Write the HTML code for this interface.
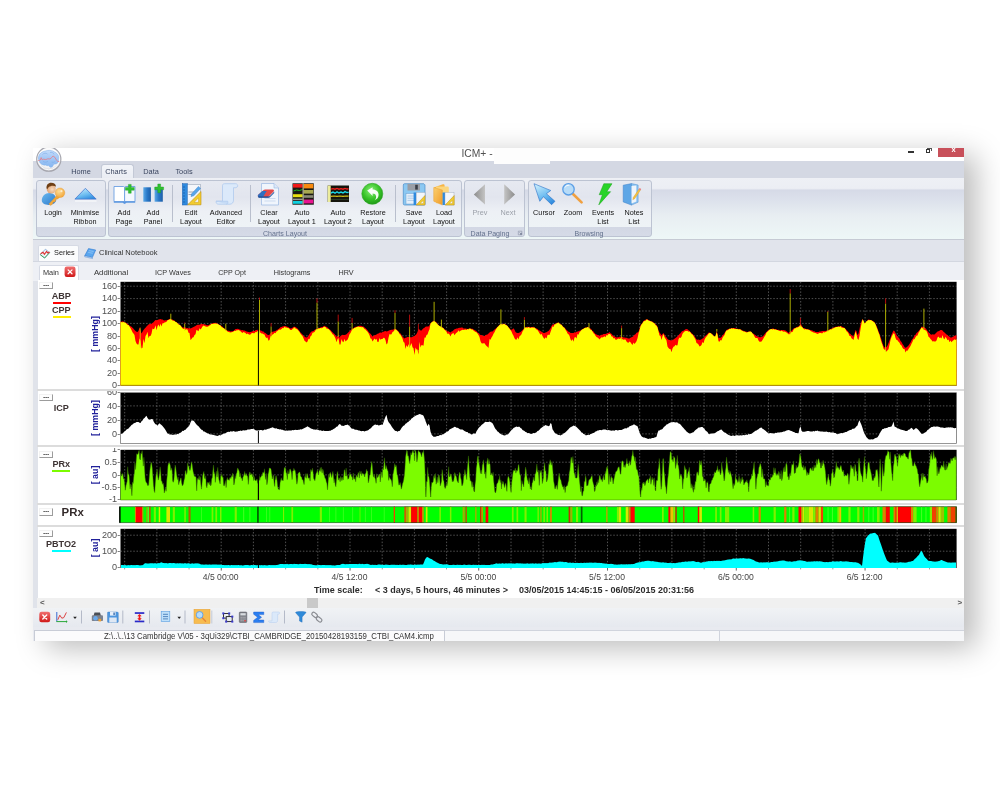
<!DOCTYPE html>
<html><head><meta charset="utf-8"><title>ICM+</title>
<style>
html,body{margin:0;padding:0;background:#fff;}
body{width:1000px;height:800px;overflow:hidden;position:relative;font-family:"Liberation Sans",sans-serif;font-size:8px;color:#222;}
#shadow{position:absolute;left:34px;top:148px;width:930px;height:492.5px;box-shadow:12px 7px 28px rgba(0,0,0,.27);}
#win{position:absolute;left:33.2px;top:147.6px;width:931.05px;height:493.3px;overflow:hidden;background:#e0e3ea;}
#in{position:absolute;left:-33.2px;top:-147.6px;width:1000px;height:800px;filter:blur(0.5px);}
.a{position:absolute;}
.t{position:absolute;white-space:nowrap;line-height:10px;transform-origin:0 50%;}
.c{transform:translateX(-50%) scaleX(.93);text-align:center;transform-origin:50% 50%;}
.lbl{position:absolute;white-space:nowrap;line-height:9px;font-size:7.8px;color:#111;text-align:center;transform:translateX(-50%) scaleX(.93);top:208px;}
.grp{position:absolute;top:179.9px;height:57.3px;border:1px solid #bcc3d2;border-radius:3px;box-sizing:border-box;background:linear-gradient(#e6e9f1 0,#e2e5ee 30%,#edf0f5 55%,#eef3f6 83%,#d2d7e4 83%,#d6dbe7 100%);}
.gl{position:absolute;top:228.5px;font-size:7.6px;color:#62708c;white-space:nowrap;transform:translateX(-50%) scaleX(.93);line-height:9px;}
.tab{position:absolute;top:166.5px;font-size:8px;color:#3b4660;transform:translateX(-50%) scaleX(.92);white-space:nowrap;line-height:10px;}
.sep{position:absolute;left:37px;width:928px;height:2px;background:#dcdcdc;}
.btn{position:absolute;border:1px solid #9c9c9c;border-top-color:#f2f2f2;border-left-color:#f2f2f2;background:#fdfdfd;box-sizing:border-box;font-size:8px;line-height:1.5px;text-align:center;color:#222;font-weight:bold;letter-spacing:-.2px}
.ax{position:absolute;font-size:9.1px;color:#505050;text-align:right;width:30px;left:90.2px;line-height:10px;white-space:nowrap;}
.unit{position:absolute;font-size:8.9px;font-weight:bold;color:#20209a;white-space:nowrap;transform:translate(-50%,-50%) rotate(-90deg);line-height:10px;}
.ser{position:absolute;font-size:9.1px;font-weight:bold;color:#3e3434;transform:translateX(-50%);white-space:nowrap;line-height:10px;}
.tl{position:absolute;top:572px;font-size:8.6px;color:#444;transform:translateX(-50%);white-space:nowrap;line-height:10px;}
</style></head><body>
<div id="shadow"></div>
<div id="win"><div id="in">
<!-- title bar -->
<div class="a" style="left:33px;top:147px;width:932px;height:14px;background:#fff"></div>
<div class="a" style="left:33px;top:161px;width:932px;height:17.3px;background:#d4d8e3"></div>
<div class="t" style="left:461.5px;top:149.1px;font-size:10.3px;color:#505050;">ICM+ -</div>
<div class="a" style="left:493.5px;top:147px;width:56.5px;height:16.8px;background:#fdfdfd"></div>
<div class="a" style="left:938px;top:147px;width:27px;height:9.6px;background:#c8505a"></div>
<div class="t" style="left:951.6px;top:144.9px;font-size:7.5px;color:#fff;font-weight:bold">x</div>
<div class="a" style="left:907.8px;top:151.3px;width:6px;height:1.5px;background:#333"></div>
<div class="a" style="left:925.5px;top:149px;width:4.6px;height:3.8px;border:1px solid #333;border-top-width:1.6px;box-sizing:border-box"></div>
<div class="a" style="left:927px;top:147.6px;width:4.6px;height:3.8px;border:1px solid #555;border-bottom:0;border-left:0;box-sizing:border-box"></div>
<!-- ribbon tabs -->
<div class="a" style="left:101px;top:163.6px;width:33px;height:15.4px;background:linear-gradient(#f3f5f9,#e9ecf3);border:1px solid #c3c9d6;border-bottom:0;border-radius:3px 3px 0 0;box-sizing:border-box"></div>
<div class="tab" style="left:80.5px">Home</div>
<div class="tab" style="left:115.800px">Charts</div>
<div class="tab" style="left:151px">Data</div>
<div class="tab" style="left:184px">Tools</div>
<!-- ribbon body -->
<div class="a" style="left:33px;top:178.3px;width:932px;height:61.4px;background:linear-gradient(#eef0f5 0,#eceef4 17%,#d6dae7 20%,#dde2ec 38%,#e8eef2 62%,#eef7f7 100%);border-bottom:1.5px solid #c6cad4;box-sizing:border-box"></div>
<div class="grp" style="left:36px;width:69.5px"></div>
<div class="grp" style="left:108px;width:353.5px"></div>
<div class="grp" style="left:464px;width:61px"></div>
<div class="grp" style="left:528px;width:123.5px"></div>
<div class="gl" style="left:285px">Charts Layout</div>
<div class="gl" style="left:489.5px">Data Paging</div>
<div class="gl" style="left:589px">Browsing</div>
<div class="lbl" style="left:52.5px">Login</div>
<div class="lbl" style="left:84.5px">Minimise<br>Ribbon</div>
<div class="lbl" style="left:124px">Add<br>Page</div>
<div class="lbl" style="left:153px">Add<br>Panel</div>
<div class="lbl" style="left:190.5px">Edit<br>Layout</div>
<div class="lbl" style="left:225.5px">Advanced<br>Editor</div>
<div class="lbl" style="left:268.5px">Clear<br>Layout</div>
<div class="lbl" style="left:302px">Auto<br>Layout 1</div>
<div class="lbl" style="left:337.5px">Auto<br>Layout 2</div>
<div class="lbl" style="left:372.5px">Restore<br>Layout</div>
<div class="lbl" style="left:413.5px">Save<br>Layout</div>
<div class="lbl" style="left:443.5px">Load<br>Layout</div>
<div class="lbl" style="left:479.5px;color:#9a9fa8">Prev</div>
<div class="lbl" style="left:508px;color:#9a9fa8">Next</div>
<div class="lbl" style="left:544px">Cursor</div>
<div class="lbl" style="left:573px">Zoom</div>
<div class="lbl" style="left:603px">Events<br>List</div>
<div class="lbl" style="left:633.5px">Notes<br>List</div>
<div class="a" style="left:172.0px;top:185px;width:1px;height:37px;background:#b9bfcd"></div>
<div class="a" style="left:250.0px;top:185px;width:1px;height:37px;background:#b9bfcd"></div>
<div class="a" style="left:395.0px;top:185px;width:1px;height:37px;background:#b9bfcd"></div>
<!-- series row -->
<div class="a" style="left:33px;top:240px;width:932px;height:21px;background:#e1e4ec"></div>
<div class="a" style="left:37.5px;top:245px;width:41.5px;height:17px;background:#fbfcfd;border:1px solid #d6dae4;border-bottom:0;border-radius:2px 2px 0 0;box-sizing:border-box"></div>
<div class="t" style="left:53.5px;top:248.3px;font-size:7.8px;color:#222;transform:scaleX(.94)">Series</div>
<div class="t" style="left:98.8px;top:248.3px;font-size:7.8px;color:#333;transform:scaleX(.965)">Clinical Notebook</div>
<div class="a" style="left:33px;top:261px;width:932px;height:19.5px;background:#eef0f5;border-top:1px solid #d3d7e0;box-sizing:border-box"></div>
<div class="a" style="left:38.5px;top:264.5px;width:40.5px;height:17px;background:#fff;border:1px solid #d6dae4;border-bottom:0;border-radius:2px 2px 0 0;box-sizing:border-box"></div>
<div class="t" style="left:43px;top:267.5px;font-size:7.8px;color:#333;transform:scaleX(.94)">Main</div>

<div class="t c" style="left:111px;top:267.5px;font-size:7.8px;color:#333;transform:translateX(-50%) scaleX(1.0)">Additional</div>
<div class="t c" style="left:172.5px;top:267.5px;font-size:7.8px;color:#333">ICP Waves</div>
<div class="t c" style="left:232px;top:267.5px;font-size:7.6px;color:#333">CPP Opt</div>
<div class="t c" style="left:292px;top:267.5px;font-size:7.8px;color:#333">Histograms</div>
<div class="t c" style="left:345.5px;top:267.5px;font-size:7.8px;color:#333">HRV</div>
<!-- chart panel -->
<div class="a" style="left:37.6px;top:279.8px;width:928px;height:318px;background:#fff"></div>
<div class="sep" style="top:389.3px"></div>
<div class="sep" style="top:445.3px"></div>
<div class="sep" style="top:502.8px"></div>
<div class="sep" style="top:524.8px"></div>
<div class="btn" style="left:39.2px;top:281.6px;width:13.6px;height:7.5px">...</div>
<div class="btn" style="left:39.2px;top:393.6px;width:13.6px;height:7.5px">...</div>
<div class="btn" style="left:39.2px;top:450.90000000000003px;width:13.6px;height:7.5px">...</div>
<div class="btn" style="left:39.2px;top:508.1px;width:13.6px;height:7.5px">...</div>
<div class="btn" style="left:39.2px;top:529.6px;width:13.6px;height:7.5px">...</div>
<div class="ax" style="top:281.0px">160-</div><div class="ax" style="top:293.4px">140-</div><div class="ax" style="top:305.8px">120-</div><div class="ax" style="top:318.2px">100-</div><div class="ax" style="top:330.6px">80-</div><div class="ax" style="top:343.0px">60-</div><div class="ax" style="top:355.4px">40-</div><div class="ax" style="top:367.8px">20-</div><div class="ax" style="top:380.2px">0-</div><div class="ax" style="top:400.7px">40-</div><div class="ax" style="top:414.7px">20-</div><div class="ax" style="top:428.7px">0-</div><div class="ax" style="top:457.0px">0.5-</div><div class="ax" style="top:469.7px">0-</div><div class="ax" style="top:482.4px">-0.5-</div><div class="ax" style="top:494.3px">-1-</div><div class="ax" style="top:530.0px">200-</div><div class="ax" style="top:546.0px">100-</div><div class="ax" style="top:562.2px">0-</div><div class="a" style="left:90px;top:391.2px;width:30px;height:5px;overflow:hidden"><div class="ax" style="left:0.2px;top:-4.6px">60-</div></div><div class="a" style="left:90px;top:447.8px;width:30px;height:5.5px;overflow:hidden"><div class="ax" style="left:0.2px;top:-3.4px">1-</div></div>
<div class="unit" style="left:95px;top:333.8px">[ mmHg]</div>
<div class="unit" style="left:95px;top:418.4px">[ mmHg]</div>
<div class="unit" style="left:95px;top:474.7px">[ au]</div>
<div class="unit" style="left:95px;top:548px">[ au]</div>
<div class="ser" style="left:61.3px;top:290.5px">ABP</div>
<div class="a" style="left:53px;top:301.5px;width:17.6px;height:2px;background:#ff0000"></div>
<div class="ser" style="left:61.3px;top:304.8px">CPP</div>
<div class="a" style="left:53px;top:315.8px;width:17.6px;height:2px;background:#ffee00"></div>
<div class="ser" style="left:61.3px;top:402.5px">ICP</div>
<div class="ser" style="left:61.3px;top:459.3px">PRx</div>
<div class="a" style="left:52px;top:470.3px;width:18.2px;height:2px;background:#7cfc00"></div>
<div class="t" style="left:61.6px;top:505.6px;font-size:11.4px;font-weight:bold;color:#332a2a;line-height:12px">PRx</div>
<div class="ser" style="left:61px;top:539px">PBTO2</div>
<div class="a" style="left:52px;top:549.6px;width:18.6px;height:2px;background:#00ffff"></div>
<div class="tl" style="left:220.7px">4/5 00:00</div>
<div class="tl" style="left:349.5px">4/5 12:00</div>
<div class="tl" style="left:478.3px">5/5 00:00</div>
<div class="tl" style="left:607px">5/5 12:00</div>
<div class="tl" style="left:735.8px">6/5 00:00</div>
<div class="tl" style="left:864.6px">6/5 12:00</div>
<div class="t" style="left:313.6px;top:584.5px;font-size:9.15px;font-weight:bold;color:#2c2c2c;transform:scaleX(.985)">Time scale:</div>
<div class="t" style="left:374.6px;top:584.5px;font-size:9.15px;font-weight:bold;color:#2c2c2c;transform:scaleX(.985)">&lt; 3 days, 5 hours, 46 minutes &gt;</div>
<div class="t" style="left:518.6px;top:584.5px;font-size:9.15px;font-weight:bold;color:#2c2c2c;transform:scaleX(.985)">03/05/2015 14:45:15 - 06/05/2015 20:31:56</div>
<!-- scrollbar -->
<div class="a" style="left:37px;top:597.5px;width:928px;height:10px;background:#f0f0f0"></div>
<div class="a" style="left:307px;top:598px;width:11px;height:9.5px;background:#c9c9c9"></div>
<div class="t" style="left:40px;top:597.5px;font-size:8px;font-weight:bold;color:#555">&lt;</div>
<div class="t" style="left:957.5px;top:597.5px;font-size:8px;font-weight:bold;color:#555">&gt;</div>
<!-- toolbar -->
<div class="a" style="left:33px;top:607.5px;width:932px;height:19px;background:linear-gradient(#f0f2f5,#e6e9ef)"></div>
<div class="a" style="left:33px;top:626.5px;width:932px;height:16px;background:#e8eaf0"></div>
<div class="a" style="left:34px;top:630.3px;width:411px;height:12px;background:#fbfbfc;border:1px solid #c8ccd6;box-sizing:border-box"></div>
<div class="a" style="left:445px;top:630.3px;width:275px;height:12px;background:#f6f7f9;border:1px solid #d0d4dd;border-left:0;box-sizing:border-box"></div><div class="a" style="left:720px;top:630.3px;width:246px;height:12px;background:#f6f7f9;border:1px solid #d0d4dd;border-left:0;box-sizing:border-box"></div>
<div class="t" style="left:103.8px;top:631.3px;font-size:8.4px;color:#333;transform:scaleX(.935)">Z:\..\..\13 Cambridge V\05 - 3qUi329\CTBI_CAMBRIDGE_20150428193159_CTBI_CAM4.icmp</div>
<svg class="a" style="left:0;top:0" width="1000" height="800" viewBox="0 0 1000 800">
<rect x="120.5" y="281.8" width="836.1" height="103.8" fill="#000"/>
<g stroke="#a0a0a0" stroke-width="0.7" stroke-dasharray="1.5 1.7" opacity=".72" fill="none"><line x1="124.7" y1="281.8" x2="124.7" y2="385.6"/><line x1="156.9" y1="281.8" x2="156.9" y2="385.6"/><line x1="189.1" y1="281.8" x2="189.1" y2="385.6"/><line x1="221.2" y1="281.8" x2="221.2" y2="385.6"/><line x1="253.4" y1="281.8" x2="253.4" y2="385.6"/><line x1="285.6" y1="281.8" x2="285.6" y2="385.6"/><line x1="317.8" y1="281.8" x2="317.8" y2="385.6"/><line x1="350" y1="281.8" x2="350" y2="385.6"/><line x1="382.2" y1="281.8" x2="382.2" y2="385.6"/><line x1="414.4" y1="281.8" x2="414.4" y2="385.6"/><line x1="446.6" y1="281.8" x2="446.6" y2="385.6"/><line x1="478.8" y1="281.8" x2="478.8" y2="385.6"/><line x1="511" y1="281.8" x2="511" y2="385.6"/><line x1="543.1" y1="281.8" x2="543.1" y2="385.6"/><line x1="575.3" y1="281.8" x2="575.3" y2="385.6"/><line x1="607.5" y1="281.8" x2="607.5" y2="385.6"/><line x1="639.7" y1="281.8" x2="639.7" y2="385.6"/><line x1="671.9" y1="281.8" x2="671.9" y2="385.6"/><line x1="704.1" y1="281.8" x2="704.1" y2="385.6"/><line x1="736.3" y1="281.8" x2="736.3" y2="385.6"/><line x1="768.5" y1="281.8" x2="768.5" y2="385.6"/><line x1="800.7" y1="281.8" x2="800.7" y2="385.6"/><line x1="832.9" y1="281.8" x2="832.9" y2="385.6"/><line x1="865.1" y1="281.8" x2="865.1" y2="385.6"/><line x1="897.2" y1="281.8" x2="897.2" y2="385.6"/><line x1="929.4" y1="281.8" x2="929.4" y2="385.6"/><line x1="120.5" y1="286.2" x2="956.6" y2="286.2"/><line x1="120.5" y1="298.6" x2="956.6" y2="298.6"/><line x1="120.5" y1="311" x2="956.6" y2="311"/><line x1="120.5" y1="323.4" x2="956.6" y2="323.4"/><line x1="120.5" y1="335.8" x2="956.6" y2="335.8"/><line x1="120.5" y1="348.2" x2="956.6" y2="348.2"/><line x1="120.5" y1="360.6" x2="956.6" y2="360.6"/><line x1="120.5" y1="373" x2="956.6" y2="373"/></g>
<path d="M120.5 385.6L120.5 321.5L121.5 321.8L122.5 321.3L123.5 321.6L124.5 322.3L125.5 322.6L126.5 323.3L127.5 323.8L128.5 324.7L129.5 325.5L130.5 326.2L131.5 326.7L132.5 327.8L133.5 328.7L134.5 330L135.5 331.1L136.5 331.7L137.5 332.1L138.5 330.7L139.5 327.6L140.5 330.4L141.5 333.5L142.5 331.8L143.5 330L144.5 328.7L145.5 327.7L146.5 326.4L147.5 325.4L148.5 324.5L149.5 324.1L150.5 324L151.5 323.7L152.5 323L153.5 322.3L154.5 321.1L155.5 320.1L156.5 320.3L157.5 319.9L158.5 319.5L159.5 319.3L160.5 319.1L161.5 319.5L162.5 319.5L163.5 320.3L164.5 320.6L165.5 320.2L166.5 320.3L167.5 320L168.5 319.4L169.5 319.1L170.5 318.8L171.5 319.5L172.5 319.6L173.5 320.3L174.5 320.6L175.5 321.8L176.5 322.2L177.5 323L178.5 323.8L179.5 324.8L180.5 325.4L181.5 326.5L182.5 327.6L183.5 327.6L184.5 327.6L185.5 327.5L186.5 328.2L187.5 328L188.5 328.4L189.5 328L190.5 328.5L191.5 328L192.5 327.5L193.5 327.1L194.5 326.6L195.5 326L196.5 325.2L197.5 324.8L198.5 324.7L199.5 324.7L200.5 324.3L201.5 323.8L202.5 324.2L203.5 324.1L204.5 324.6L205.5 324.5L206.5 325.3L207.5 325.2L208.5 325.3L209.5 324.5L210.5 324L211.5 323.8L212.5 323.2L213.5 323L214.5 322.9L215.5 322.7L216.5 323L217.5 323.7L218.5 323.9L219.5 324.9L220.5 325.2L221.5 326.1L222.5 326.8L223.5 327.9L224.5 328.2L225.5 329.7L226.5 329.7L227.5 330.8L228.5 330.8L229.5 331L230.5 331.6L231.5 331.2L232.5 331.2L233.5 330.9L234.5 330L235.5 329.1L236.5 329L237.5 328.7L238.5 328.9L239.5 329.4L240.5 329.8L241.5 330.2L242.5 330.1L243.5 330.5L244.5 330.6L245.5 331.1L246.5 331.6L247.5 331.8L248.5 332.1L249.5 332.2L250.5 332L251.5 331.7L252.5 331.3L253.5 330.9L254.5 330.9L255.5 330.3L256.5 329.9L257.5 329.8L258.5 330.3L259.5 330.1L260.5 330.6L261.5 330.8L262.5 331.4L263.5 331.6L264.5 332.7L265.5 333L266.5 334L267.5 334.7L268.5 335.2L269.5 334.8L270.5 333L271.5 332L272.5 331.7L273.5 331.6L274.5 331.3L275.5 331.1L276.5 330.2L277.5 329.7L278.5 328.9L279.5 328.3L280.5 327.3L281.5 327.1L282.5 326.5L283.5 326.3L284.5 325.9L285.5 326.1L286.5 326.5L287.5 326.7L288.5 327.3L289.5 328.1L290.5 328.4L291.5 328.3L292.5 327.8L293.5 326.8L294.5 326.7L295.5 327.1L296.5 327.8L297.5 328.6L298.5 329.7L299.5 331L300.5 332.5L301.5 333.6L302.5 334.5L303.5 335.7L304.5 336.4L305.5 337.3L306.5 337.6L307.5 337.1L308.5 335.4L309.5 333.9L310.5 332.5L311.5 331.6L312.5 331.3L313.5 330.9L314.5 330.1L315.5 329.3L316.5 329.2L317.5 328.4L318.5 328.1L319.5 328L320.5 327.5L321.5 326.9L322.5 327.1L323.5 326.3L324.5 325.7L325.5 326.4L326.5 326.7L327.5 327.5L328.5 328.5L329.5 329.4L330.5 330L331.5 331.3L332.5 332.2L333.5 333.3L334.5 334.1L335.5 335.5L336.5 336.7L337.5 336.1L338.5 335.5L339.5 337.7L340.5 336.1L341.5 335.6L342.5 334.7L343.5 335L344.5 334.9L345.5 334.8L346.5 334.3L347.5 333.3L348.5 332.3L349.5 331.3L350.5 330.2L351.5 329.6L352.5 328.6L353.5 328.3L354.5 327.6L355.5 326.7L356.5 326.8L357.5 326.5L358.5 326.2L359.5 325.7L360.5 325.7L361.5 326L362.5 326.5L363.5 326.5L364.5 327.4L365.5 328.2L366.5 329.2L367.5 330.3L368.5 331.7L369.5 332.9L370.5 333.8L371.5 335.1L372.5 336.6L373.5 335.8L374.5 335.3L375.5 334.9L376.5 334.5L377.5 333.8L378.5 333.5L379.5 332.7L380.5 332.6L381.5 332.8L382.5 332L383.5 331.8L384.5 331.2L385.5 331.1L386.5 331.4L387.5 331.3L388.5 330.8L389.5 330.2L390.5 330.1L391.5 329.8L392.5 329.8L393.5 329.4L394.5 328.8L395.5 329L396.5 329.4L397.5 330.4L398.5 331.6L399.5 332.7L400.5 333.5L401.5 335L402.5 336.5L403.5 337.5L404.5 338.4L405.5 337.7L406.5 337.5L407.5 336.9L408.5 337.1L409.5 337.2L410.5 337.3L411.5 337.2L412.5 337L413.5 336.2L414.5 335.9L415.5 335.3L416.5 334.1L417.5 331.9L418.5 329L419.5 329.6L420.5 330.5L421.5 330.5L422.5 329.3L423.5 328.2L424.5 327.8L425.5 326.7L426.5 326.6L427.5 326.6L428.5 326.6L429.5 325.2L430.5 323.2L431.5 322.4L432.5 321.4L433.5 320.7L434.5 320.9L435.5 321.8L436.5 322.5L437.5 323.8L438.5 325L439.5 325.9L440.5 326.4L441.5 326.9L442.5 327.3L443.5 328.3L444.5 329.2L445.5 329.8L446.5 330.7L447.5 331.4L448.5 331.2L449.5 332.1L450.5 332.5L451.5 331.6L452.5 331.2L453.5 330.3L454.5 329.2L455.5 329.1L456.5 328.4L457.5 328.5L458.5 328.1L459.5 327.7L460.5 327.7L461.5 327.4L462.5 327.4L463.5 328.5L464.5 328.4L465.5 328.6L466.5 328.8L467.5 329L468.5 328.7L469.5 328.6L470.5 328.6L471.5 328.7L472.5 328.8L473.5 329.4L474.5 330.1L475.5 330.4L476.5 331.3L477.5 332.6L478.5 333L479.5 334.3L480.5 335.1L481.5 335.1L482.5 335.6L483.5 335.9L484.5 335.9L485.5 335.1L486.5 334.8L487.5 334.4L488.5 333.6L489.5 332.6L490.5 331.7L491.5 331.6L492.5 331.4L493.5 330.4L494.5 329.6L495.5 328.7L496.5 327.8L497.5 326.9L498.5 325.8L499.5 325L500.5 324.2L501.5 324.1L502.5 324.2L503.5 323.4L504.5 323.9L505.5 324.3L506.5 325.3L507.5 325.9L508.5 327.2L509.5 328.2L510.5 329.8L511.5 329.7L512.5 329.2L513.5 328.2L514.5 329.8L515.5 332L516.5 332.8L517.5 333L518.5 333L519.5 332.5L520.5 331.9L521.5 331L522.5 330.1L523.5 329.2L524.5 327.3L525.5 327.4L526.5 327L527.5 326.8L528.5 326.9L529.5 326.8L530.5 327.2L531.5 326.9L532.5 327L533.5 326.8L534.5 327.5L535.5 328.2L536.5 328.4L537.5 329.1L538.5 330.1L539.5 330.4L540.5 331L541.5 331.7L542.5 332.2L543.5 333L544.5 333L545.5 332.5L546.5 332.3L547.5 331.4L548.5 330.9L549.5 329.8L550.5 328.2L551.5 326L552.5 324.4L553.5 324.4L554.5 324.1L555.5 323.4L556.5 323.1L557.5 322.8L558.5 322.4L559.5 323.2L560.5 324L561.5 324.7L562.5 325.8L563.5 326.9L564.5 327.5L565.5 328.8L566.5 329.9L567.5 330.8L568.5 331.7L569.5 332L570.5 332.9L571.5 332.9L572.5 333.1L573.5 333.1L574.5 332.3L575.5 332.6L576.5 331.7L577.5 331.4L578.5 331.3L579.5 330.7L580.5 330.5L581.5 329.8L582.5 329.2L583.5 328.5L584.5 328L585.5 327.5L586.5 327.6L587.5 327.1L588.5 326.8L589.5 328L590.5 328.5L591.5 329.4L592.5 331L593.5 331.6L594.5 332.9L595.5 334L596.5 334.4L597.5 334.9L598.5 335.2L599.5 335.7L600.5 335.2L601.5 334.8L602.5 334.7L603.5 334.1L604.5 333.9L605.5 334.1L606.5 333.5L607.5 333.3L608.5 333.1L609.5 332.1L610.5 333.2L611.5 333.8L612.5 335.1L613.5 335.9L614.5 336.2L615.5 337.1L616.5 337.6L617.5 337.2L618.5 337.3L619.5 336.7L620.5 336.7L621.5 337L622.5 337L623.5 337.5L624.5 337.5L625.5 337.7L626.5 337.8L627.5 338.3L628.5 338.5L629.5 338.5L630.5 337.8L631.5 337.3L632.5 337L633.5 335.9L634.5 334.8L635.5 334.2L636.5 332.7L637.5 332.6L638.5 331.7L639.5 329L640.5 325.3L641.5 323.9L642.5 322.8L643.5 320.9L644.5 320.2L645.5 319.8L646.5 319.2L647.5 319.3L648.5 320.2L649.5 320.2L650.5 321.2L651.5 321.4L652.5 321.6L653.5 322.7L654.5 323.1L655.5 324.2L656.5 325.3L657.5 326.5L658.5 330.5L659.5 332.6L660.5 333.7L661.5 335.2L662.5 333.9L663.5 333.1L664.5 334.8L665.5 336.5L666.5 337.3L667.5 338.9L668.5 339.8L669.5 340.1L670.5 340.3L671.5 340.6L672.5 340L673.5 339.4L674.5 338.8L675.5 338.1L676.5 337.3L677.5 336.3L678.5 335.2L679.5 334L680.5 333.3L681.5 331.8L682.5 330.9L683.5 330.7L684.5 329.9L685.5 329.3L686.5 329.1L687.5 329.3L688.5 330.2L689.5 331.1L690.5 332L691.5 333.1L692.5 333.9L693.5 334.9L694.5 336.3L695.5 337.7L696.5 339.4L697.5 339.8L698.5 339.5L699.5 340.1L700.5 339.8L701.5 339.3L702.5 338.4L703.5 338.1L704.5 336.8L705.5 335.8L706.5 335.1L707.5 334L708.5 332.8L709.5 332.4L710.5 333L711.5 333.5L712.5 334.2L713.5 335.7L714.5 336.6L715.5 335.7L716.5 331.6L717.5 333.3L718.5 338.1L719.5 337.7L720.5 337.8L721.5 336.9L722.5 335.3L723.5 334.6L724.5 333.1L725.5 331.5L726.5 330.1L727.5 329.5L728.5 328.9L729.5 328.7L730.5 328.5L731.5 328L732.5 328.1L733.5 327.9L734.5 328.1L735.5 328.3L736.5 328.8L737.5 328.8L738.5 329.1L739.5 329L740.5 329.5L741.5 329.7L742.5 330.7L743.5 330.7L744.5 331.2L745.5 331.6L746.5 331.7L747.5 332L748.5 331.8L749.5 331.3L750.5 331.4L751.5 332.1L752.5 333.2L753.5 333.8L754.5 334.6L755.5 335.2L756.5 335.9L757.5 336.4L758.5 336.7L759.5 337.2L760.5 337.2L761.5 337L762.5 336.5L763.5 335.7L764.5 334.2L765.5 333L766.5 332L767.5 330.8L768.5 330.3L769.5 329.6L770.5 329.3L771.5 329.1L772.5 328.6L773.5 328.5L774.5 329.2L775.5 329.1L776.5 329.2L777.5 330L778.5 329.8L779.5 330.1L780.5 330.3L781.5 330L782.5 330.1L783.5 329.9L784.5 330.3L785.5 330.6L786.5 331.3L787.5 332L788.5 333.1L789.5 332L790.5 331.2L791.5 330.7L792.5 329.7L793.5 328.6L794.5 328.1L795.5 327.8L796.5 327.2L797.5 326.8L798.5 326.5L799.5 325.4L800.5 323.7L801.5 325.2L802.5 327.1L803.5 328.4L804.5 328.1L805.5 328.7L806.5 329L807.5 329L808.5 329.4L809.5 329.7L810.5 329.9L811.5 330.3L812.5 330.6L813.5 331.3L814.5 331.2L815.5 331.9L816.5 332L817.5 331.9L818.5 332.1L819.5 331.6L820.5 331.5L821.5 331.3L822.5 331.1L823.5 331L824.5 331.1L825.5 331.1L826.5 330.4L827.5 330.7L828.5 330.2L829.5 329.3L830.5 329.2L831.5 328.6L832.5 328.2L833.5 327.4L834.5 327.2L835.5 326.7L836.5 326.7L837.5 326.4L838.5 326.4L839.5 326.3L840.5 326L841.5 326.3L842.5 327L843.5 327.2L844.5 327.7L845.5 329L846.5 330L847.5 330.9L848.5 332.1L849.5 333.4L850.5 334L851.5 335.3L852.5 335.6L853.5 336.7L854.5 333.7L855.5 330L856.5 331.3L857.5 335.3L858.5 333.6L859.5 329L860.5 323.7L861.5 321.2L862.5 319.1L863.5 320.6L864.5 322.7L865.5 322.7L866.5 321.2L867.5 320.3L868.5 319.4L869.5 319.8L870.5 320.1L871.5 320.1L872.5 321L873.5 321.3L874.5 322.2L875.5 324.3L876.5 325.8L877.5 328.4L878.5 331.3L879.5 333.8L880.5 336.9L881.5 339.7L882.5 343.3L883.5 345.9L884.5 347.6L885.5 347.3L886.5 347.2L887.5 345.6L888.5 342.9L889.5 340.5L890.5 337.8L891.5 334.7L892.5 332.4L893.5 330.6L894.5 331.1L895.5 333L896.5 335.1L897.5 336.5L898.5 337.6L899.5 338.8L900.5 340.9L901.5 342.1L902.5 344.1L903.5 345.2L904.5 346.9L905.5 348.3L906.5 347.2L907.5 346.5L908.5 345.6L909.5 343.9L910.5 342.5L911.5 340.3L912.5 338.9L913.5 337.4L914.5 335.8L915.5 334.7L916.5 333L917.5 332.2L918.5 331.3L919.5 329.9L920.5 328.7L921.5 326.8L922.5 326.8L923.5 327.1L924.5 327.5L925.5 328.3L926.5 329.4L927.5 330.9L928.5 332.2L929.5 333.5L930.5 334.2L931.5 334.7L932.5 334.2L933.5 334.5L934.5 334.4L935.5 333.4L936.5 332.6L937.5 331.6L938.5 331.2L939.5 330.7L940.5 330.1L941.5 329.9L942.5 330.6L943.5 331.8L944.5 332.6L945.5 333.5L946.5 334.4L947.5 335L948.5 335.9L949.5 336.8L950.5 337.4L951.5 337.5L952.5 337L953.5 336.6L954.5 335.8L955.5 335.6L956.5 334.9L956.5 385.6 Z" fill="#ff0000"/>
<path d="M120.5 385.6L120.5 321.5L121.5 322.2L122.5 322.2L123.5 322L124.5 322.4L125.5 322.8L126.5 323.8L127.5 324.9L128.5 325.1L129.5 326.5L130.5 327.9L131.5 330L132.5 332.2L133.5 333.6L134.5 335.1L135.5 341L136.5 343.5L137.5 344.6L138.5 344.4L139.5 338.3L140.5 340.7L141.5 348.4L142.5 347.8L143.5 338.8L144.5 343.3L145.5 336L146.5 334.4L147.5 331.8L148.5 338.3L149.5 335.9L150.5 336.1L151.5 333.7L152.5 328.4L153.5 329.2L154.5 328.6L155.5 325.3L156.5 330.3L157.5 326.3L158.5 324.6L159.5 327L160.5 323.6L161.5 326.4L162.5 323.3L163.5 323.3L164.5 322.6L165.5 322.2L166.5 321.7L167.5 320.3L168.5 320.1L169.5 319.6L170.5 319.1L171.5 319.7L172.5 320.4L173.5 320.8L174.5 321.1L175.5 322L176.5 322.2L177.5 323.2L178.5 324.4L179.5 324.8L180.5 325.4L181.5 327L182.5 328.3L183.5 328.9L184.5 328.7L185.5 329.7L186.5 329.2L187.5 329.4L188.5 332.8L189.5 332.9L190.5 340.1L191.5 339L192.5 337.4L193.5 337.2L194.5 335.1L195.5 334.3L196.5 329.8L197.5 330.5L198.5 331.3L199.5 328.3L200.5 329.6L201.5 328.2L202.5 326.4L203.5 325.4L204.5 326.1L205.5 326.4L206.5 326.7L207.5 326.8L208.5 326.2L209.5 325.5L210.5 325L211.5 323.8L212.5 324.1L213.5 323.7L214.5 323.4L215.5 323.5L216.5 323.8L217.5 323.8L218.5 324.4L219.5 325.1L220.5 325.5L221.5 327L222.5 327.5L223.5 327.9L224.5 328.9L225.5 329.8L226.5 330.5L227.5 331.4L228.5 332.1L229.5 332.3L230.5 332.4L231.5 332.3L232.5 331.9L233.5 331.4L234.5 330.8L235.5 330.9L236.5 330.2L237.5 330.2L238.5 330L239.5 330.6L240.5 331.2L241.5 332.2L242.5 333L243.5 332.1L244.5 332.4L245.5 332.9L246.5 334.2L247.5 333.4L248.5 334.2L249.5 334.8L250.5 334.4L251.5 333.2L252.5 332.9L253.5 333.2L254.5 333.3L255.5 332L256.5 332.2L257.5 331.1L258.5 331.3L259.5 331.5L260.5 332.7L261.5 333.5L262.5 333.4L263.5 334.2L264.5 334.6L265.5 337L266.5 338L267.5 337.6L268.5 340.8L269.5 340L270.5 336.2L271.5 336L272.5 334.5L273.5 333.9L274.5 332.7L275.5 333.2L276.5 331.4L277.5 331.1L278.5 330L279.5 329.4L280.5 329.7L281.5 329L282.5 327.9L283.5 328.3L284.5 326.8L285.5 327.5L286.5 327.5L287.5 328L288.5 327.9L289.5 329.1L290.5 330L291.5 329.9L292.5 329L293.5 328.2L294.5 327.2L295.5 328.6L296.5 329.1L297.5 329.6L298.5 330.8L299.5 332L300.5 333.7L301.5 335.1L302.5 336.1L303.5 338.2L304.5 340.7L305.5 341.4L306.5 342.4L307.5 341.5L308.5 338.8L309.5 339.3L310.5 336.2L311.5 335.5L312.5 332.8L313.5 332.4L314.5 331.9L315.5 330.3L316.5 329.2L317.5 329L318.5 328.5L319.5 328.4L320.5 328L321.5 328.3L322.5 328L323.5 326.9L324.5 326.8L325.5 327.1L326.5 328.5L327.5 328.7L328.5 329L329.5 329.9L330.5 331.3L331.5 332.5L332.5 334.2L333.5 334.8L334.5 336.4L335.5 338.6L336.5 342.2L337.5 338.9L338.5 338L339.5 344.5L340.5 344.6L341.5 339L342.5 341.6L343.5 342.3L344.5 338.8L345.5 341.4L346.5 340.6L347.5 339.8L348.5 337.4L349.5 334.3L350.5 332.9L351.5 330.7L352.5 329.3L353.5 328.8L354.5 327.7L355.5 327.7L356.5 327L357.5 326.7L358.5 326.4L359.5 326.9L360.5 326.9L361.5 327.2L362.5 327L363.5 327.7L364.5 328.9L365.5 329.5L366.5 330.7L367.5 331.8L368.5 333.2L369.5 335.3L370.5 338.6L371.5 338.8L372.5 341.5L373.5 340.1L374.5 338.5L375.5 339.7L376.5 338.8L377.5 341.9L378.5 342L379.5 337.9L380.5 339.8L381.5 338.9L382.5 339L383.5 337.8L384.5 338.1L385.5 340.1L386.5 344.4L387.5 343.3L388.5 337.7L389.5 333.9L390.5 334.6L391.5 334.3L392.5 332L393.5 331.4L394.5 329.9L395.5 329.2L396.5 330L397.5 331.1L398.5 331.9L399.5 333.9L400.5 334.8L401.5 336.4L402.5 338.6L403.5 342L404.5 342.7L405.5 348.9L406.5 344.9L407.5 347.2L408.5 343.9L409.5 347.4L410.5 345.2L411.5 343L412.5 347.3L413.5 348.3L414.5 355L415.5 347.5L416.5 349.6L417.5 349.6L418.5 354.5L419.5 341.8L420.5 347.5L421.5 345L422.5 345.3L423.5 345.8L424.5 337.6L425.5 337.8L426.5 334.9L427.5 334.5L428.5 331.4L429.5 329.3L430.5 323.6L431.5 322.6L432.5 321.7L433.5 321.3L434.5 321.3L435.5 321.9L436.5 323.1L437.5 324.3L438.5 325.3L439.5 326.1L440.5 326.5L441.5 326.9L442.5 327.8L443.5 328.3L444.5 329.7L445.5 330.6L446.5 331.8L447.5 334L448.5 333.4L449.5 334.4L450.5 336.4L451.5 334.2L452.5 333.4L453.5 332.9L454.5 335.2L455.5 333.7L456.5 332.7L457.5 331.9L458.5 330.2L459.5 331.7L460.5 330.8L461.5 330.3L462.5 329.7L463.5 330L464.5 329.8L465.5 329.6L466.5 329.9L467.5 329L468.5 329.4L469.5 328.6L470.5 328.8L471.5 329.4L472.5 329.6L473.5 330.5L474.5 331.2L475.5 331.9L476.5 332.2L477.5 333.4L478.5 335.1L479.5 336.9L480.5 341.3L481.5 343.2L482.5 343.6L483.5 343.2L484.5 343.2L485.5 344.7L486.5 346L487.5 346.7L488.5 347.9L489.5 339L490.5 339.8L491.5 337.6L492.5 336L493.5 333.7L494.5 332.3L495.5 330.1L496.5 328.5L497.5 326.9L498.5 326.2L499.5 325L500.5 324.3L501.5 324.2L502.5 324.6L503.5 324L504.5 324L505.5 324.9L506.5 325.3L507.5 325.9L508.5 327.5L509.5 328.7L510.5 330.1L511.5 331.4L512.5 334L513.5 335.8L514.5 338.3L515.5 339.6L516.5 339.8L517.5 337.2L518.5 339.4L519.5 336.3L520.5 335.6L521.5 334.3L522.5 331.5L523.5 329.9L524.5 327.7L525.5 327.4L526.5 327.5L527.5 327.7L528.5 327.1L529.5 327.8L530.5 328L531.5 327.4L532.5 327.6L533.5 327.7L534.5 327.5L535.5 328.6L536.5 329.4L537.5 330L538.5 331.5L539.5 333.3L540.5 334.8L541.5 333.8L542.5 336L543.5 337.7L544.5 339.1L545.5 337.2L546.5 338.5L547.5 335L548.5 334.8L549.5 334.9L550.5 331.9L551.5 329.3L552.5 326.3L553.5 327L554.5 324.6L555.5 324.2L556.5 323.6L557.5 323L558.5 322.4L559.5 323.8L560.5 324.6L561.5 324.7L562.5 326.2L563.5 327.3L564.5 328.1L565.5 329.8L566.5 331.3L567.5 333.6L568.5 334.3L569.5 335.8L570.5 339.2L571.5 341L572.5 338.9L573.5 341.8L574.5 337.6L575.5 337.1L576.5 338.4L577.5 334.1L578.5 334.8L579.5 332.3L580.5 331.2L581.5 329.9L582.5 329.2L583.5 329.1L584.5 328L585.5 327.8L586.5 327.7L587.5 327.1L588.5 327.5L589.5 328.4L590.5 329.7L591.5 330.1L592.5 331.5L593.5 333.2L594.5 334.1L595.5 335.7L596.5 337L597.5 337.4L598.5 338.2L599.5 339.4L600.5 338.2L601.5 337.3L602.5 337.4L603.5 336.9L604.5 336.3L605.5 337.3L606.5 335L607.5 335.5L608.5 334.1L609.5 334.1L610.5 334.2L611.5 336.6L612.5 336.6L613.5 338.4L614.5 337.9L615.5 339.8L616.5 339.8L617.5 339.1L618.5 338.6L619.5 339L620.5 338.3L621.5 338.8L622.5 339.3L623.5 339.7L624.5 339.5L625.5 339.4L626.5 341.4L627.5 342.4L628.5 342.7L629.5 341.6L630.5 342.2L631.5 343.8L632.5 344.9L633.5 342.4L634.5 344.1L635.5 342.7L636.5 341.2L637.5 338.2L638.5 333.4L639.5 330.4L640.5 326.6L641.5 324.4L642.5 323.3L643.5 321.5L644.5 321.1L645.5 320.8L646.5 319.6L647.5 319.7L648.5 320.5L649.5 320.9L650.5 321.2L651.5 321.4L652.5 322.3L653.5 322.8L654.5 323.6L655.5 325L656.5 325.7L657.5 327.5L658.5 331.6L659.5 335.4L660.5 336.1L661.5 340.1L662.5 336.2L663.5 334.1L664.5 337.3L665.5 338.8L666.5 340.6L667.5 346.4L668.5 348L669.5 349L670.5 349L671.5 352.2L672.5 348.4L673.5 346.8L674.5 346.3L675.5 344.8L676.5 345.4L677.5 345.2L678.5 339.2L679.5 337.5L680.5 338.1L681.5 336.7L682.5 333.7L683.5 332.6L684.5 331.4L685.5 330.9L686.5 331L687.5 331.1L688.5 331.8L689.5 331.6L690.5 332.5L691.5 333.9L692.5 334.6L693.5 336L694.5 337.8L695.5 339.5L696.5 343.1L697.5 343.4L698.5 344.6L699.5 346.5L700.5 346.1L701.5 344.9L702.5 341.9L703.5 343.3L704.5 339.7L705.5 337.7L706.5 336.6L707.5 335.3L708.5 333.7L709.5 332.9L710.5 333.1L711.5 334.1L712.5 334.7L713.5 336L714.5 336.6L715.5 336.2L716.5 332.2L717.5 334.7L718.5 341.2L719.5 341.8L720.5 340.1L721.5 340.6L722.5 337.8L723.5 336.3L724.5 334.9L725.5 332.1L726.5 330.5L727.5 330.3L728.5 329.8L729.5 328.7L730.5 328.9L731.5 328.2L732.5 328.7L733.5 328.2L734.5 328.9L735.5 329L736.5 329.1L737.5 329L738.5 329.5L739.5 329.3L740.5 329.5L741.5 330.5L742.5 330.7L743.5 331.5L744.5 331.4L745.5 332.1L746.5 332.4L747.5 332.2L748.5 331.8L749.5 331.8L750.5 331.6L751.5 332.1L752.5 333.4L753.5 334.5L754.5 336.4L755.5 337.9L756.5 337.9L757.5 338L758.5 340.5L759.5 341.8L760.5 341.7L761.5 341.6L762.5 340.1L763.5 338.2L764.5 336.5L765.5 335L766.5 332.5L767.5 331.8L768.5 330.8L769.5 329.7L770.5 329.3L771.5 329.1L772.5 329.4L773.5 329.1L774.5 329.5L775.5 329.4L776.5 330.1L777.5 330L778.5 330.5L779.5 331L780.5 331.2L781.5 330.5L782.5 331.2L783.5 331.7L784.5 331.4L785.5 331.9L786.5 332.5L787.5 333.3L788.5 334.3L789.5 334.2L790.5 333.3L791.5 332L792.5 332L793.5 329.7L794.5 328.5L795.5 328.2L796.5 327.4L797.5 327.4L798.5 326.9L799.5 326.3L800.5 326L801.5 326.5L802.5 327.5L803.5 328.6L804.5 329.5L805.5 329L806.5 329.4L807.5 329.5L808.5 329.8L809.5 330.1L810.5 331.1L811.5 331.6L812.5 331.9L813.5 332.5L814.5 332.7L815.5 332.9L816.5 333.4L817.5 334L818.5 333.4L819.5 333L820.5 332.9L821.5 333.3L822.5 333.2L823.5 332.1L824.5 332.5L825.5 332.1L826.5 331.6L827.5 330.8L828.5 330.5L829.5 330L830.5 329.3L831.5 329.4L832.5 328.5L833.5 328.2L834.5 327.8L835.5 327.3L836.5 327.1L837.5 327L838.5 326.4L839.5 326.9L840.5 326.3L841.5 327.4L842.5 327.7L843.5 328.1L844.5 328L845.5 329.3L846.5 331.2L847.5 332.1L848.5 333.5L849.5 336.1L850.5 336.1L851.5 338.2L852.5 339.1L853.5 340.1L854.5 335.8L855.5 331.5L856.5 334.4L857.5 338.8L858.5 340L859.5 335.8L860.5 329.3L861.5 323.4L862.5 319.2L863.5 320.8L864.5 323.6L865.5 322.7L866.5 321.3L867.5 320.7L868.5 320L869.5 320.3L870.5 320.1L871.5 320.4L872.5 321L873.5 322.1L874.5 322.6L875.5 324.3L876.5 327L877.5 329.6L878.5 332.6L879.5 334.7L880.5 338.9L881.5 342.3L882.5 345L883.5 348.6L884.5 349.7L885.5 349.5L886.5 351.7L887.5 350.2L888.5 349.2L889.5 344.8L890.5 340.1L891.5 337.1L892.5 335L893.5 333.2L894.5 334L895.5 338L896.5 340L897.5 340.3L898.5 341.8L899.5 342.7L900.5 344.7L901.5 345.5L902.5 347.8L903.5 349.1L904.5 349.1L905.5 352.4L906.5 350.5L907.5 350.8L908.5 349L909.5 347.6L910.5 346.1L911.5 343.7L912.5 341.7L913.5 339.3L914.5 339.2L915.5 337.3L916.5 335.8L917.5 335.4L918.5 332.8L919.5 331.3L920.5 329.3L921.5 327.6L922.5 328L923.5 329.4L924.5 330.1L925.5 330.3L926.5 331L927.5 333.2L928.5 336.8L929.5 337.6L930.5 339.1L931.5 339.9L932.5 341.6L933.5 341.3L934.5 341.6L935.5 341.4L936.5 340.4L937.5 337.4L938.5 336.4L939.5 337.9L940.5 337.6L941.5 338.4L942.5 334.9L943.5 338.3L944.5 339.3L945.5 336.7L946.5 338.2L947.5 340.3L948.5 339.4L949.5 342.3L950.5 340.6L951.5 342.3L952.5 341.1L953.5 340.2L954.5 339.2L955.5 340L956.5 339L956.5 385.6 Z" fill="#ffff00"/>
<g opacity="0.8"><rect x="139.7" y="328.1" width="1" height="19.6" fill="#d8d800"/><rect x="139.7" y="327.3" width="1" height="0.8" fill="#e01010"/><rect x="170.3" y="313.7" width="1" height="6.6" fill="#d8d800"/><rect x="184.2" y="323.6" width="1" height="7.1" fill="#d8d800"/><rect x="184.2" y="322.5" width="1" height="1" fill="#e01010"/><rect x="225.3" y="323.6" width="1" height="7.5" fill="#d8d800"/><rect x="259" y="299.8" width="1" height="33.7" fill="#d8d800"/><rect x="259" y="297.6" width="1" height="2.2" fill="#e01010"/><rect x="270.6" y="326.4" width="1" height="10.8" fill="#d8d800"/><rect x="270.6" y="323.1" width="1" height="3.4" fill="#e01010"/><rect x="316.5" y="302.6" width="1" height="27.4" fill="#d8d800"/><rect x="316.5" y="298.4" width="1" height="4.2" fill="#e01010"/><rect x="337.7" y="321.4" width="1" height="15.4" fill="#d8d800"/><rect x="337.7" y="314.6" width="1" height="6.8" fill="#e01010"/><rect x="351.6" y="323.1" width="1" height="6.9" fill="#d8d800"/><rect x="351.6" y="317.9" width="1" height="5.1" fill="#e01010"/><rect x="394.5" y="312.9" width="1" height="17.1" fill="#d8d800"/><rect x="394.5" y="310.3" width="1" height="2.6" fill="#e01010"/><rect x="409.1" y="326.4" width="1" height="21.2" fill="#d8d800"/><rect x="409.1" y="314.6" width="1" height="11.9" fill="#e01010"/><rect x="417.9" y="350.2" width="1" height="1" fill="#d8d800"/><rect x="417.9" y="323.9" width="1" height="26.4" fill="#e01010"/><rect x="433.6" y="301.8" width="1" height="19.7" fill="#d8d800"/><rect x="440.9" y="319.6" width="1" height="8.7" fill="#d8d800"/><rect x="500.4" y="309.4" width="1" height="16.1" fill="#d8d800"/><rect x="523.9" y="319.6" width="1" height="9.5" fill="#d8d800"/><rect x="523.9" y="317.1" width="1" height="2.5" fill="#e01010"/><rect x="588.5" y="323.1" width="1" height="5.8" fill="#d8d800"/><rect x="621.1" y="328.1" width="1" height="12.3" fill="#d8d800"/><rect x="621.1" y="325.6" width="1" height="2.5" fill="#e01010"/><rect x="716.3" y="329" width="1" height="2.7" fill="#d8d800"/><rect x="789.7" y="293.3" width="1" height="41" fill="#d8d800"/><rect x="789.7" y="289.1" width="1" height="4.2" fill="#e01010"/><rect x="799.9" y="324.8" width="1" height="1.9" fill="#d8d800"/><rect x="799.9" y="317.9" width="1" height="6.8" fill="#e01010"/><rect x="827.3" y="312" width="1" height="20" fill="#d8d800"/><rect x="827.3" y="311.1" width="1" height="0.9" fill="#e01010"/><rect x="885.1" y="303.5" width="1" height="48.2" fill="#d8d800"/><rect x="885.1" y="298.4" width="1" height="5.1" fill="#e01010"/><rect x="923.4" y="308.6" width="1" height="21.5" fill="#d8d800"/></g>
<rect x="257.9" y="330" width="1" height="55.6" fill="#000"/>
<rect x="120.5" y="384.8" width="836.1" height="1" fill="#8a8a00" opacity=".6"/>
<rect x="120.5" y="392.7" width="836.1" height="50.6" fill="#000"/>
<g stroke="#a0a0a0" stroke-width="0.7" stroke-dasharray="1.5 1.7" opacity=".72" fill="none"><line x1="124.7" y1="392.7" x2="124.7" y2="443.3"/><line x1="156.9" y1="392.7" x2="156.9" y2="443.3"/><line x1="189.1" y1="392.7" x2="189.1" y2="443.3"/><line x1="221.2" y1="392.7" x2="221.2" y2="443.3"/><line x1="253.4" y1="392.7" x2="253.4" y2="443.3"/><line x1="285.6" y1="392.7" x2="285.6" y2="443.3"/><line x1="317.8" y1="392.7" x2="317.8" y2="443.3"/><line x1="350" y1="392.7" x2="350" y2="443.3"/><line x1="382.2" y1="392.7" x2="382.2" y2="443.3"/><line x1="414.4" y1="392.7" x2="414.4" y2="443.3"/><line x1="446.6" y1="392.7" x2="446.6" y2="443.3"/><line x1="478.8" y1="392.7" x2="478.8" y2="443.3"/><line x1="511" y1="392.7" x2="511" y2="443.3"/><line x1="543.1" y1="392.7" x2="543.1" y2="443.3"/><line x1="575.3" y1="392.7" x2="575.3" y2="443.3"/><line x1="607.5" y1="392.7" x2="607.5" y2="443.3"/><line x1="639.7" y1="392.7" x2="639.7" y2="443.3"/><line x1="671.9" y1="392.7" x2="671.9" y2="443.3"/><line x1="704.1" y1="392.7" x2="704.1" y2="443.3"/><line x1="736.3" y1="392.7" x2="736.3" y2="443.3"/><line x1="768.5" y1="392.7" x2="768.5" y2="443.3"/><line x1="800.7" y1="392.7" x2="800.7" y2="443.3"/><line x1="832.9" y1="392.7" x2="832.9" y2="443.3"/><line x1="865.1" y1="392.7" x2="865.1" y2="443.3"/><line x1="897.2" y1="392.7" x2="897.2" y2="443.3"/><line x1="929.4" y1="392.7" x2="929.4" y2="443.3"/><line x1="120.5" y1="405.9" x2="956.6" y2="405.9"/><line x1="120.5" y1="419.9" x2="956.6" y2="419.9"/><line x1="120.5" y1="433.9" x2="956.6" y2="433.9"/></g>
<path d="M120.5 443.3L120.5 434L121.5 434.1L122.5 433.4L123.5 432.5L124.5 431.4L125.5 430.8L126.5 429.4L127.5 429L128.5 428.4L129.5 427.2L130.5 426.3L131.5 424.9L132.5 424.4L133.5 423.5L134.5 422.9L135.5 422.7L136.5 422L137.5 421.9L138.5 422L139.5 422.8L140.5 423L141.5 421.3L142.5 420.4L143.5 418.7L144.5 418.1L145.5 416.7L146.5 415.8L147.5 418.1L148.5 419.3L149.5 419.8L150.5 419.6L151.5 418.9L152.5 418.9L153.5 421.3L154.5 422.9L155.5 424.2L156.5 424.5L157.5 425.7L158.5 424.3L159.5 423.2L160.5 424.2L161.5 424.9L162.5 426L163.5 427.2L164.5 428.5L165.5 429.9L166.5 431.8L167.5 433.6L168.5 433.8L169.5 434.5L170.5 434.5L171.5 434.6L172.5 435L173.5 434.7L174.5 434.6L175.5 434.5L176.5 434.5L177.5 433.8L178.5 434.3L179.5 433L180.5 432.8L181.5 432.1L182.5 430.8L183.5 430.9L184.5 430.1L185.5 429.7L186.5 428.4L187.5 427.4L188.5 426.5L189.5 425.3L190.5 422.4L191.5 420.5L192.5 420.4L193.5 420.7L194.5 421.8L195.5 423.2L196.5 424.5L197.5 425.6L198.5 426.2L199.5 427.6L200.5 428.7L201.5 429.7L202.5 430.1L203.5 431.4L204.5 431.4L205.5 432.2L206.5 432.8L207.5 433.5L208.5 433.4L209.5 434.3L210.5 434.4L211.5 434.5L212.5 434.8L213.5 435.1L214.5 435.3L215.5 435.4L216.5 435.7L217.5 435.9L218.5 435.4L219.5 435L220.5 435.4L221.5 434.7L222.5 434.3L223.5 433.8L224.5 433.6L225.5 433.2L226.5 432.5L227.5 432.1L228.5 431.7L229.5 432.1L230.5 431.3L231.5 431.5L232.5 431.6L233.5 431.1L234.5 431.5L235.5 431.7L236.5 431.4L237.5 431.5L238.5 430.9L239.5 431L240.5 430.6L241.5 430.9L242.5 430.4L243.5 430.3L244.5 430.5L245.5 430.2L246.5 430.2L247.5 429.6L248.5 429.6L249.5 429.6L250.5 429.3L251.5 429.1L252.5 429.1L253.5 429.1L254.5 429.5L255.5 430.2L256.5 430.4L257.5 430.4L258.5 430.5L259.5 430.3L260.5 430.1L261.5 430.1L262.5 430.4L263.5 430.3L264.5 429.6L265.5 429.7L266.5 429.4L267.5 429.1L268.5 428.8L269.5 428.5L270.5 427.9L271.5 427.8L272.5 427.3L273.5 427.7L274.5 428.2L275.5 428.4L276.5 428.3L277.5 429.1L278.5 429.1L279.5 429.4L280.5 429.2L281.5 429.8L282.5 429.8L283.5 430.3L284.5 430.4L285.5 430.7L286.5 430.6L287.5 430.7L288.5 430.4L289.5 430.6L290.5 430.6L291.5 430.5L292.5 430L293.5 430.2L294.5 430L295.5 429.8L296.5 430L297.5 430L298.5 429.7L299.5 429.7L300.5 429.3L301.5 429.4L302.5 429.1L303.5 428.4L304.5 428.1L305.5 427.6L306.5 427.1L307.5 426.2L308.5 426.9L309.5 427.5L310.5 428.3L311.5 428.8L312.5 429.1L313.5 429.4L314.5 429.5L315.5 429.8L316.5 429.5L317.5 429.7L318.5 430.1L319.5 430.4L320.5 430.3L321.5 430.8L322.5 430.9L323.5 430.6L324.5 431.1L325.5 431.1L326.5 431L327.5 430.9L328.5 431L329.5 430.8L330.5 430.7L331.5 430.1L332.5 429.7L333.5 429L334.5 428.5L335.5 427.8L336.5 426.8L337.5 426.5L338.5 425.1L339.5 424L340.5 424.4L341.5 425.7L342.5 425.8L343.5 426.1L344.5 425.5L345.5 425L346.5 425.1L347.5 424.4L348.5 425.2L349.5 426L350.5 427.2L351.5 428.4L352.5 428.7L353.5 428.8L354.5 429.4L355.5 429.7L356.5 429.8L357.5 429.9L358.5 430.4L359.5 430.6L360.5 431.1L361.5 431.3L362.5 431.1L363.5 431L364.5 431.5L365.5 431L366.5 430.7L367.5 430.5L368.5 430.1L369.5 429L370.5 428.4L371.5 427.6L372.5 426.2L373.5 425.6L374.5 424.8L375.5 424.5L376.5 425.1L377.5 424.8L378.5 425.4L379.5 425.2L380.5 424.9L381.5 424.5L382.5 424.9L383.5 422.3L384.5 419.3L385.5 416.7L386.5 414.7L387.5 419.4L388.5 421.9L389.5 423.3L390.5 424.4L391.5 426.3L392.5 427.7L393.5 429.1L394.5 430.3L395.5 431L396.5 431.1L397.5 431.7L398.5 431L399.5 430.9L400.5 429.7L401.5 428L402.5 426.7L403.5 425.7L404.5 425.2L405.5 423.8L406.5 423.2L407.5 422.3L408.5 421.7L409.5 420.8L410.5 419.9L411.5 418.5L412.5 417.9L413.5 417L414.5 416.6L415.5 415.8L416.5 415.2L417.5 414.9L418.5 414.5L419.5 414L420.5 414.2L421.5 414.8L422.5 415L423.5 415.8L424.5 418.2L425.5 420.9L426.5 423.5L427.5 426.2L428.5 423.8L429.5 425.3L430.5 431.5L431.5 434.6L432.5 435.8L433.5 436.8L434.5 436.8L435.5 436.8L436.5 436.2L437.5 436L438.5 436L439.5 435.3L440.5 435.1L441.5 435.2L442.5 434.3L443.5 434.2L444.5 433.5L445.5 432.8L446.5 432.1L447.5 431.6L448.5 430.9L449.5 429.5L450.5 429L451.5 428.5L452.5 428L453.5 427.4L454.5 426.8L455.5 427.1L456.5 427.7L457.5 427.7L458.5 428.3L459.5 429.1L460.5 429.4L461.5 429.6L462.5 429.5L463.5 430.3L464.5 431.1L465.5 431.6L466.5 432L467.5 432.1L468.5 433.2L469.5 433.2L470.5 434L471.5 434.5L472.5 434.2L473.5 433.6L474.5 433.6L475.5 433.7L476.5 431.3L477.5 429.7L478.5 428.2L479.5 427L480.5 426.3L481.5 425L482.5 424.2L483.5 423.6L484.5 422.6L485.5 421.8L486.5 422L487.5 422L488.5 422L489.5 421.4L490.5 422L491.5 422.5L492.5 423.3L493.5 424.9L494.5 427.3L495.5 428.9L496.5 430L497.5 431.5L498.5 432.1L499.5 433.3L500.5 433.7L501.5 434.5L502.5 434.7L503.5 435.3L504.5 435.4L505.5 435.2L506.5 434.5L507.5 434.5L508.5 433.9L509.5 432.5L510.5 431.3L511.5 430.1L512.5 429.3L513.5 428.1L514.5 427.6L515.5 426.9L516.5 426.6L517.5 427L518.5 426.7L519.5 426.8L520.5 428L521.5 428.6L522.5 430L523.5 430.5L524.5 431.1L525.5 432.1L526.5 432.2L527.5 433.3L528.5 433L529.5 433.3L530.5 434L531.5 434L532.5 433.4L533.5 433L534.5 433.3L535.5 432.7L536.5 432.2L537.5 431.1L538.5 430.7L539.5 429.7L540.5 428.6L541.5 427.7L542.5 426.9L543.5 426.2L544.5 425.7L545.5 425L546.5 425.5L547.5 425.7L548.5 426.2L549.5 425.8L550.5 423L551.5 424.1L552.5 429.3L553.5 430.8L554.5 432.5L555.5 433.6L556.5 433.9L557.5 434.4L558.5 435.1L559.5 435.1L560.5 435.4L561.5 434.7L562.5 434.6L563.5 433.4L564.5 432.9L565.5 432.3L566.5 431.3L567.5 430.2L568.5 429.2L569.5 427.9L570.5 427.3L571.5 426.7L572.5 426.2L573.5 425.6L574.5 426L575.5 426.3L576.5 427.1L577.5 427.9L578.5 428.9L579.5 430.1L580.5 431.1L581.5 432.4L582.5 432.8L583.5 434L584.5 434.3L585.5 435.3L586.5 435.3L587.5 435.1L588.5 434.7L589.5 434.9L590.5 434.1L591.5 434.1L592.5 433.3L593.5 433L594.5 432.4L595.5 431.5L596.5 431.2L597.5 430.6L598.5 430.4L599.5 429.9L600.5 430L601.5 430.3L602.5 429.8L603.5 429.6L604.5 429.6L605.5 429.6L606.5 430.1L607.5 430.3L608.5 430.1L609.5 430.3L610.5 430.6L611.5 430.8L612.5 430.6L613.5 430.5L614.5 430.8L615.5 430.1L616.5 430.1L617.5 430.5L618.5 430.2L619.5 429.9L620.5 430L621.5 430.1L622.5 429.5L623.5 429.1L624.5 428.6L625.5 428.3L626.5 428.4L627.5 427.6L628.5 427.4L629.5 426.3L630.5 426L631.5 425.5L632.5 425.3L633.5 424.6L634.5 424.5L635.5 425.2L636.5 425.8L637.5 426.3L638.5 428.9L639.5 432.7L640.5 434.5L641.5 436.2L642.5 437.1L643.5 437.5L644.5 437.5L645.5 438L646.5 438.2L647.5 438.7L648.5 438.9L649.5 438.6L650.5 438.7L651.5 438.2L652.5 437.9L653.5 437.9L654.5 437.6L655.5 437.3L656.5 436.7L657.5 433.1L658.5 430.6L659.5 430.5L660.5 429.8L661.5 429.6L662.5 428.9L663.5 427.5L664.5 426.4L665.5 425.7L666.5 424.6L667.5 424.3L668.5 423.5L669.5 423L670.5 422.6L671.5 422.3L672.5 422.2L673.5 422L674.5 422.3L675.5 422.4L676.5 422.2L677.5 422.5L678.5 423.6L679.5 423.7L680.5 424.6L681.5 425.8L682.5 427L683.5 428L684.5 429.3L685.5 430.2L686.5 431.5L687.5 432.2L688.5 433.1L689.5 433.6L690.5 433.5L691.5 433L692.5 432.6L693.5 432.2L694.5 430.9L695.5 430L696.5 429.2L697.5 428.5L698.5 427.6L699.5 427.6L700.5 427.2L701.5 426.9L702.5 426.9L703.5 428L704.5 429.1L705.5 430.4L706.5 431.2L707.5 432.1L708.5 433.7L709.5 434.2L710.5 433.7L711.5 433.5L712.5 433.4L713.5 433.4L714.5 433.2L715.5 432.8L716.5 432L717.5 431.2L718.5 430.9L719.5 430.3L720.5 429.8L721.5 429.6L722.5 430.8L723.5 431.7L724.5 432.4L725.5 432.7L726.5 433.8L727.5 434.3L728.5 435.1L729.5 435.2L730.5 435.8L731.5 436L732.5 435.6L733.5 435.6L734.5 435.9L735.5 435.5L736.5 435.3L737.5 435.2L738.5 435.4L739.5 435.6L740.5 435.3L741.5 435.6L742.5 435.3L743.5 434.9L744.5 435.3L745.5 434.9L746.5 434.5L747.5 435.1L748.5 434.1L749.5 434.2L750.5 433.9L751.5 433.9L752.5 432.9L753.5 432.2L754.5 431.6L755.5 430.8L756.5 430.5L757.5 429.7L758.5 429.3L759.5 428.3L760.5 427.7L761.5 427.6L762.5 428.8L763.5 429.3L764.5 430L765.5 430.8L766.5 431.7L767.5 432.5L768.5 433.4L769.5 433.2L770.5 433L771.5 433.2L772.5 433.2L773.5 433.6L774.5 433.5L775.5 432.8L776.5 433L777.5 432.5L778.5 432.6L779.5 432.6L780.5 432.3L781.5 432.3L782.5 431.9L783.5 431.4L784.5 431.4L785.5 431.1L786.5 430.5L787.5 430.3L788.5 430.1L789.5 430.2L790.5 430.7L791.5 431L792.5 431.4L793.5 432L794.5 432.2L795.5 432.9L796.5 433L797.5 433.2L798.5 433.2L799.5 428.4L800.5 426.3L801.5 430.8L802.5 431.7L803.5 431.8L804.5 431.7L805.5 431.5L806.5 431.2L807.5 431.1L808.5 431.1L809.5 431.2L810.5 431.4L811.5 431.5L812.5 431.5L813.5 431.1L814.5 431.4L815.5 430.8L816.5 431.1L817.5 430.6L818.5 431.2L819.5 431.2L820.5 431.5L821.5 431.6L822.5 431.5L823.5 431.7L824.5 431.7L825.5 431.8L826.5 431.6L827.5 431.9L828.5 432.3L829.5 432L830.5 432.6L831.5 432.5L832.5 432.5L833.5 432.5L834.5 433L835.5 433.1L836.5 433.7L837.5 434.2L838.5 434L839.5 433.6L840.5 433.3L841.5 433L842.5 433.2L843.5 432.8L844.5 432.6L845.5 432L846.5 432L847.5 431.2L848.5 430.8L849.5 430.3L850.5 430L851.5 429.7L852.5 428.7L853.5 428.7L854.5 428.4L855.5 427.6L856.5 426.3L857.5 425.5L858.5 422.3L859.5 420.3L860.5 422.7L861.5 425.1L862.5 428.1L863.5 431.2L864.5 433.8L865.5 435.4L866.5 437.2L867.5 438.2L868.5 439.2L869.5 439.4L870.5 439.4L871.5 439.2L872.5 439.4L873.5 439.2L874.5 438.6L875.5 438.1L876.5 437.8L877.5 437.3L878.5 435.7L879.5 434L880.5 431.9L881.5 430.5L882.5 429.1L883.5 428.9L884.5 428.2L885.5 428.3L886.5 427.9L887.5 427.7L888.5 426.9L889.5 426.9L890.5 426.8L891.5 426.4L892.5 424.5L893.5 421.4L894.5 426.5L895.5 427L896.5 427.5L897.5 428.4L898.5 428.4L899.5 429.1L900.5 429.4L901.5 429.7L902.5 430L903.5 430.2L904.5 430.6L905.5 430.9L906.5 430.9L907.5 430.8L908.5 429.8L909.5 429.5L910.5 428.6L911.5 427.7L912.5 428.7L913.5 430.1L914.5 429.3L915.5 428.3L916.5 428.2L917.5 429.1L918.5 430L919.5 431.3L920.5 432.4L921.5 434.1L922.5 433.8L923.5 433.5L924.5 432.8L925.5 432.3L926.5 431.4L927.5 429.9L928.5 429.6L929.5 428.8L930.5 427.7L931.5 427L932.5 426.9L933.5 426.5L934.5 426.4L935.5 426.7L936.5 426.4L937.5 426.5L938.5 426.7L939.5 427.1L940.5 427.4L941.5 427.5L942.5 427.5L943.5 427.8L944.5 428.1L945.5 427.8L946.5 427.4L947.5 427.5L948.5 427.3L949.5 427.6L950.5 427.3L951.5 427.6L952.5 427.6L953.5 427.9L954.5 428.3L955.5 428L956.5 427.9L956.5 443.3 Z" fill="#fff"/>
<rect x="257.9" y="431" width="1" height="12.3" fill="#000"/>
<rect x="120.5" y="392.7" width="836.1" height="50.6" fill="none" stroke="#777" stroke-width="0.6"/>
<rect x="120.5" y="449.8" width="836.1" height="50.2" fill="#000"/>
<g stroke="#a0a0a0" stroke-width="0.7" stroke-dasharray="1.5 1.7" opacity=".72" fill="none"><line x1="124.7" y1="449.8" x2="124.7" y2="500"/><line x1="156.9" y1="449.8" x2="156.9" y2="500"/><line x1="189.1" y1="449.8" x2="189.1" y2="500"/><line x1="221.2" y1="449.8" x2="221.2" y2="500"/><line x1="253.4" y1="449.8" x2="253.4" y2="500"/><line x1="285.6" y1="449.8" x2="285.6" y2="500"/><line x1="317.8" y1="449.8" x2="317.8" y2="500"/><line x1="350" y1="449.8" x2="350" y2="500"/><line x1="382.2" y1="449.8" x2="382.2" y2="500"/><line x1="414.4" y1="449.8" x2="414.4" y2="500"/><line x1="446.6" y1="449.8" x2="446.6" y2="500"/><line x1="478.8" y1="449.8" x2="478.8" y2="500"/><line x1="511" y1="449.8" x2="511" y2="500"/><line x1="543.1" y1="449.8" x2="543.1" y2="500"/><line x1="575.3" y1="449.8" x2="575.3" y2="500"/><line x1="607.5" y1="449.8" x2="607.5" y2="500"/><line x1="639.7" y1="449.8" x2="639.7" y2="500"/><line x1="671.9" y1="449.8" x2="671.9" y2="500"/><line x1="704.1" y1="449.8" x2="704.1" y2="500"/><line x1="736.3" y1="449.8" x2="736.3" y2="500"/><line x1="768.5" y1="449.8" x2="768.5" y2="500"/><line x1="800.7" y1="449.8" x2="800.7" y2="500"/><line x1="832.9" y1="449.8" x2="832.9" y2="500"/><line x1="865.1" y1="449.8" x2="865.1" y2="500"/><line x1="897.2" y1="449.8" x2="897.2" y2="500"/><line x1="929.4" y1="449.8" x2="929.4" y2="500"/><line x1="120.5" y1="462.2" x2="956.6" y2="462.2"/><line x1="120.5" y1="474.9" x2="956.6" y2="474.9"/><line x1="120.5" y1="487.6" x2="956.6" y2="487.6"/></g>
<path d="M120.5 500L120.5 471.6L121.1 474.8L121.7 476.2L122.3 473.7L122.9 473.7L123.5 478.8L124.1 478.5L124.7 483.7L125.3 490.2L125.9 486L126.5 483.5L127.1 481.3L127.7 466.7L128.3 474.5L128.9 473.8L129.5 480.2L130.1 488.8L130.7 484.1L131.3 485.6L131.9 495.7L132.5 482L133.1 483.4L133.7 477.2L134.3 473.1L134.9 462.8L135.5 469.5L136.1 461.7L136.7 453.7L137.3 454.2L137.9 454.2L138.5 452.1L139.1 450.3L139.7 458.7L140.3 459.9L140.9 453L141.5 453.8L142.1 450.6L142.7 458.1L143.3 466.1L143.9 457.3L144.5 466.6L145.1 477.4L145.7 481.1L146.3 482.7L146.9 482.8L147.5 485.2L148.1 485.7L148.7 484.5L149.3 476.6L149.9 470.3L150.5 465.7L151.1 462.2L151.7 463.5L152.3 468.3L152.9 476.4L153.5 484.9L154.1 490.5L154.7 492.5L155.3 483L155.9 476.2L156.5 473.3L157.1 469.3L157.7 476L158.3 480.1L158.9 477.4L159.5 473.3L160.1 466.8L160.7 472.3L161.3 481.2L161.9 480.8L162.5 484.3L163.1 483.1L163.7 485.9L164.3 492.9L164.9 490.4L165.5 487.6L166.1 491.3L166.7 480.7L167.3 474.9L167.9 466L168.5 463.2L169.1 462.7L169.7 463.4L170.3 465.5L170.9 470.4L171.5 467.8L172.1 470.5L172.7 481.1L173.3 482.3L173.9 479.7L174.5 472.5L175.1 465L175.7 467.1L176.3 471.7L176.9 475.9L177.5 479.6L178.1 476.9L178.7 484.7L179.3 481.9L179.9 480.8L180.5 478.2L181.1 477.9L181.7 483.1L182.3 485.8L182.9 485.2L183.5 483.5L184.1 480L184.7 478L185.3 471.3L185.9 470.4L186.5 474.4L187.1 472.5L187.7 462.8L188.3 466L188.9 466.6L189.5 470.1L190.1 470.4L190.7 467.5L191.3 462L191.9 462.7L192.5 467.1L193.1 471.3L193.7 473.6L194.3 476.1L194.9 476.4L195.5 476.5L196.1 477.6L196.7 490.8L197.3 480.1L197.9 478.1L198.5 479.5L199.1 475.7L199.7 480.2L200.3 476.6L200.9 484.5L201.5 489.1L202.1 482.5L202.7 475.4L203.3 473.3L203.9 471.4L204.5 477.5L205.1 478.9L205.7 475.7L206.3 485.6L206.9 487.8L207.5 482.4L208.1 482.2L208.7 482.9L209.3 484.7L209.9 481.5L210.5 485.8L211.1 485.2L211.7 479.1L212.3 477.5L212.9 470.3L213.5 465.1L214.1 473.9L214.7 472.2L215.3 482.4L215.9 476.3L216.5 471.2L217.1 477.1L217.7 467.4L218.3 473.2L218.9 479.3L219.5 481.5L220.1 483.9L220.7 475.9L221.3 476.2L221.9 473.8L222.5 477.3L223.1 477.1L223.7 485.5L224.3 485.8L224.9 483.6L225.5 480.6L226.1 487.6L226.7 480.3L227.3 477.5L227.9 479.9L228.5 479.4L229.1 480.4L229.7 478.3L230.3 477L230.9 478.6L231.5 475.4L232.1 476.7L232.7 473.1L233.3 474.9L233.9 485L234.5 482.2L235.1 475.6L235.7 478.6L236.3 473.8L236.9 472.6L237.5 467.9L238.1 468.8L238.7 469.9L239.3 471.7L239.9 476.9L240.5 473.2L241.1 478.3L241.7 477.7L242.3 480.9L242.9 477.3L243.5 475.9L244.1 474.5L244.7 471.4L245.3 475.4L245.9 473.3L246.5 474.1L247.1 476.2L247.7 475.7L248.3 484.4L248.9 477L249.5 472.2L250.1 472.2L250.7 475.1L251.3 474.3L251.9 473.5L252.5 476.8L253.1 473.8L253.7 480.6L254.3 476.4L254.9 479.9L255.5 480.6L256.1 480.8L256.7 479.2L257.3 479.5L257.9 483.4L258.5 476.8L259.1 475.7L259.7 480.4L260.3 477.1L260.9 477.2L261.5 475.3L262.1 476L262.7 472.6L263.3 472.1L263.9 473.3L264.5 468.8L265.1 475.4L265.7 479.4L266.3 473.3L266.9 484.7L267.5 481.2L268.1 474L268.7 472.1L269.3 467.9L269.9 468.1L270.5 468.3L271.1 469.6L271.7 473.8L272.3 479L272.9 476.3L273.5 474.7L274.1 482.8L274.7 486.4L275.3 476L275.9 479.8L276.5 475.6L277.1 480.9L277.7 486.6L278.3 489.2L278.9 489.2L279.5 489.7L280.1 482.4L280.7 480.2L281.3 477.7L281.9 480.6L282.5 480L283.1 480.7L283.7 473.2L284.3 467.8L284.9 467.4L285.5 467.7L286.1 472.5L286.7 473.6L287.3 479.6L287.9 470.4L288.5 473.8L289.1 473.8L289.7 469.3L290.3 468.9L290.9 470.6L291.5 473L292.1 479.6L292.7 471L293.3 470.9L293.9 468.3L294.5 470.3L295.1 470.2L295.7 473.2L296.3 479L296.9 484.2L297.5 480.6L298.1 473.4L298.7 472.8L299.3 472.1L299.9 471.9L300.5 475.8L301.1 476.7L301.7 477.3L302.3 480L302.9 479.4L303.5 482L304.1 484.6L304.7 476.4L305.3 477.5L305.9 473.5L306.5 478.3L307.1 473.5L307.7 474.7L308.3 478.2L308.9 478L309.5 477.8L310.1 481.1L310.7 469.5L311.3 469.9L311.9 471.7L312.5 468.1L313.1 472.3L313.7 478.4L314.3 479.6L314.9 480.7L315.5 476.8L316.1 473.5L316.7 472.6L317.3 469.8L317.9 472.1L318.5 474.9L319.1 470.8L319.7 470.5L320.3 467.5L320.9 471.6L321.5 467.2L322.1 473.2L322.7 468.9L323.3 470.8L323.9 474.8L324.5 475.7L325.1 478.6L325.7 478.6L326.3 481.7L326.9 483.3L327.5 489.8L328.1 482.1L328.7 474.3L329.3 477.4L329.9 472.8L330.5 472.6L331.1 474.7L331.7 477.5L332.3 474.2L332.9 471.4L333.5 476.1L334.1 482.8L334.7 478.8L335.3 485L335.9 486.7L336.5 478.2L337.1 473.1L337.7 471.4L338.3 480.2L338.9 478.2L339.5 477.9L340.1 481.8L340.7 476.4L341.3 477.7L341.9 480.7L342.5 477.1L343.1 480.1L343.7 475.6L344.3 469.9L344.9 469.7L345.5 476.1L346.1 468.1L346.7 476.2L347.3 475.2L347.9 479.3L348.5 478.7L349.1 477.1L349.7 473.5L350.3 474L350.9 474.5L351.5 476.5L352.1 476.4L352.7 480.1L353.3 473L353.9 478.9L354.5 479.1L355.1 476.9L355.7 481.7L356.3 475L356.9 476L357.5 477.3L358.1 472.4L358.7 473L359.3 478.1L359.9 470.9L360.5 474.1L361.1 471.2L361.7 475.7L362.3 472.8L362.9 474L363.5 473.8L364.1 474.9L364.7 477L365.3 473.2L365.9 473.4L366.5 469.2L367.1 471L367.7 471.3L368.3 482.8L368.9 480.5L369.5 475.6L370.1 475.1L370.7 469.5L371.3 463.6L371.9 461.4L372.5 468.1L373.1 474.9L373.7 477.2L374.3 474.1L374.9 478L375.5 478.9L376.1 483.3L376.7 473.7L377.3 477.3L377.9 477.4L378.5 475.6L379.1 474L379.7 474.3L380.3 482L380.9 471.5L381.5 472.5L382.1 477.6L382.7 468.2L383.3 469.8L383.9 465L384.5 457.8L385.1 465L385.7 469.2L386.3 465.5L386.9 468.2L387.5 470L388.1 471.5L388.7 480.4L389.3 476.4L389.9 478.3L390.5 478.9L391.1 479.7L391.7 481.5L392.3 486.7L392.9 474.8L393.5 472.2L394.1 468.8L394.7 463.6L395.3 467.1L395.9 464.8L396.5 466.8L397.1 474.4L397.7 475.4L398.3 480.3L398.9 485.2L399.5 484.7L400.1 482.4L400.7 484.7L401.3 489.1L401.9 487.1L402.5 483.8L403.1 482.3L403.7 479.6L404.3 475.5L404.9 468.8L405.5 457.6L406.1 453.8L406.7 450.3L407.3 451.1L407.9 456.2L408.5 455.8L409.1 460.7L409.7 463.6L410.3 458.2L410.9 452.6L411.5 455L412.1 452.4L412.7 450.3L413.3 452.9L413.9 450.3L414.5 460.8L415.1 450.3L415.7 450.7L416.3 453.6L416.9 461.9L417.5 458.3L418.1 451.5L418.7 450.3L419.3 452L419.9 452L420.5 453.1L421.1 454.7L421.7 456.8L422.3 451.9L422.9 453.1L423.5 450.3L424.1 455.8L424.7 461.9L425.3 479L425.9 497L426.5 481.5L427.1 481.9L427.7 467.4L428.3 476.1L428.9 476.7L429.5 480.8L430.1 489.5L430.7 497L431.3 486.4L431.9 482L432.5 482.7L433.1 482L433.7 476.8L434.3 474.7L434.9 478.4L435.5 473.4L436.1 484.2L436.7 481.8L437.3 476.9L437.9 482.7L438.5 474.9L439.1 474.9L439.7 478.6L440.3 485.8L440.9 483.8L441.5 481L442.1 469.5L442.7 473.2L443.3 479.8L443.9 481.2L444.5 486.8L445.1 488.5L445.7 487.2L446.3 482.5L446.9 485.9L447.5 482.3L448.1 475.7L448.7 466.7L449.3 476.6L449.9 477L450.5 473.9L451.1 474L451.7 477.2L452.3 481.9L452.9 480.5L453.5 481.4L454.1 477.9L454.7 472.6L455.3 474.1L455.9 476.2L456.5 476.7L457.1 480.5L457.7 481.7L458.3 482.9L458.9 475.9L459.5 472.3L460.1 473L460.7 477.8L461.3 480L461.9 485.8L462.5 485.2L463.1 483L463.7 476.6L464.3 475L464.9 469.5L465.5 473.6L466.1 475.6L466.7 479.6L467.3 468.5L467.9 462.8L468.5 455.9L469.1 467.1L469.7 476.2L470.3 481L470.9 480.6L471.5 482.5L472.1 487.3L472.7 481.8L473.3 486.7L473.9 491L474.5 492L475.1 484.2L475.7 479.7L476.3 468.1L476.9 464.5L477.5 457L478.1 455.8L478.7 461.4L479.3 464.4L479.9 468L480.5 473.5L481.1 470L481.7 474L482.3 465.5L482.9 463.4L483.5 459.8L484.1 466.7L484.7 474.1L485.3 471.8L485.9 478.4L486.5 465.5L487.1 461.3L487.7 457.9L488.3 464.4L488.9 459.3L489.5 463.7L490.1 464.5L490.7 475.1L491.3 472.7L491.9 474.4L492.5 475.6L493.1 472.2L493.7 480.9L494.3 486.3L494.9 491.9L495.5 492.9L496.1 490.8L496.7 484.6L497.3 483L497.9 482.7L498.5 479.2L499.1 480.4L499.7 475.5L500.3 482.6L500.9 479.8L501.5 489L502.1 481.1L502.7 484.2L503.3 481.6L503.9 484.4L504.5 487.5L505.1 484.5L505.7 482.9L506.3 486.2L506.9 491.4L507.5 479.4L508.1 476.4L508.7 476.5L509.3 478.4L509.9 482.1L510.5 488.5L511.1 492.4L511.7 483L512.3 477.9L512.9 473.3L513.5 470.2L514.1 470.8L514.7 470.5L515.3 468.1L515.9 473.2L516.5 470.1L517.1 471.3L517.7 469.7L518.3 465L518.9 464.5L519.5 471.8L520.1 475L520.7 475.5L521.3 490.7L521.9 480.5L522.5 483.4L523.1 484.6L523.7 486.9L524.3 478.2L524.9 475.9L525.5 467.1L526.1 469.5L526.7 475.2L527.3 479.5L527.9 480.8L528.5 483.8L529.1 477.5L529.7 482.5L530.3 489L530.9 486.5L531.5 490L532.1 483.1L532.7 482.3L533.3 477.1L533.9 480.3L534.5 480.9L535.1 473.8L535.7 473.6L536.3 469.7L536.9 464L537.5 472.1L538.1 470L538.7 475.5L539.3 485.4L539.9 470.6L540.5 472.5L541.1 470.1L541.7 472.8L542.3 483.5L542.9 480.6L543.5 477L544.1 466.1L544.7 462.7L545.3 471.2L545.9 470.5L546.5 482L547.1 480.5L547.7 478L548.3 472.4L548.9 463.7L549.5 464.6L550.1 459.7L550.7 461.9L551.3 465.2L551.9 461.6L552.5 466.1L553.1 473.5L553.7 481.2L554.3 484.3L554.9 488.8L555.5 488.4L556.1 485.3L556.7 485.8L557.3 489.4L557.9 482.9L558.5 477.7L559.1 473.1L559.7 476.4L560.3 479.5L560.9 479.8L561.5 483.3L562.1 485.1L562.7 486.9L563.3 486.4L563.9 489.6L564.5 485.6L565.1 492.6L565.7 487.3L566.3 486.4L566.9 485.6L567.5 485.6L568.1 482.2L568.7 480.6L569.3 472.6L569.9 470.1L570.5 462.5L571.1 457.1L571.7 458.5L572.3 463.1L572.9 456.4L573.5 463.7L574.1 472.9L574.7 473.7L575.3 477.8L575.9 477.6L576.5 478.2L577.1 477.5L577.7 470L578.3 464.3L578.9 474.8L579.5 480.8L580.1 485.9L580.7 491.7L581.3 486.4L581.9 495.6L582.5 495.7L583.1 491.2L583.7 491.1L584.3 481.2L584.9 481.9L585.5 475.5L586.1 478L586.7 485.9L587.3 485.3L587.9 485.7L588.5 482.1L589.1 479.6L589.7 479.6L590.3 478.9L590.9 477.5L591.5 476.3L592.1 475.6L592.7 481L593.3 483.4L593.9 485.3L594.5 491.6L595.1 490.6L595.7 484.9L596.3 486.3L596.9 481.8L597.5 484.5L598.1 479.5L598.7 482.7L599.3 476.2L599.9 475.2L600.5 477.8L601.1 480.3L601.7 479.1L602.3 481.8L602.9 477.9L603.5 475.3L604.1 480.1L604.7 479.3L605.3 471.3L605.9 473.6L606.5 466.9L607.1 468.7L607.7 465.7L608.3 473.9L608.9 484.4L609.5 473.9L610.1 477.2L610.7 481.8L611.3 476.3L611.9 477.6L612.5 478.3L613.1 484L613.7 480.4L614.3 477.7L614.9 474.9L615.5 472.5L616.1 471.2L616.7 471.2L617.3 469.8L617.9 467.8L618.5 466.9L619.1 466.7L619.7 469.6L620.3 474.1L620.9 474.1L621.5 462.5L622.1 460.8L622.7 461L623.3 462L623.9 467.2L624.5 464.9L625.1 467.6L625.7 464.7L626.3 463.2L626.9 458.4L627.5 464L628.1 462.7L628.7 466.1L629.3 460.7L629.9 463.1L630.5 465.2L631.1 460.5L631.7 456.5L632.3 454.7L632.9 450.3L633.5 456L634.1 456.5L634.7 461.3L635.3 457L635.9 464.5L636.5 469.3L637.1 469.5L637.7 470.9L638.3 475L638.9 476.2L639.5 484.7L640.1 493.3L640.7 497L641.3 488.1L641.9 490.3L642.5 482.7L643.1 484L643.7 482L644.3 482.7L644.9 485.7L645.5 483.4L646.1 480.9L646.7 480.6L647.3 479.4L647.9 479.1L648.5 482.9L649.1 478.2L649.7 478.8L650.3 475.6L650.9 484.3L651.5 480.7L652.1 477.2L652.7 479.7L653.3 478.5L653.9 485.5L654.5 477.8L655.1 489.4L655.7 491L656.3 481.1L656.9 480L657.5 480.6L658.1 469.7L658.7 467.3L659.3 458.5L659.9 465.2L660.5 477.7L661.1 489.3L661.7 485.7L662.3 472.6L662.9 458.7L663.5 458.8L664.1 471.6L664.7 475.8L665.3 484.7L665.9 487.5L666.5 493.7L667.1 485.7L667.7 478.8L668.3 474.8L668.9 467.2L669.5 460.3L670.1 452.4L670.7 451.6L671.3 453.1L671.9 459.9L672.5 459.3L673.1 461.8L673.7 456L674.3 457.6L674.9 457.7L675.5 468.5L676.1 465.3L676.7 461.6L677.3 455.4L677.9 464.5L678.5 466L679.1 470.3L679.7 479.1L680.3 473.8L680.9 475.5L681.5 475.1L682.1 478.1L682.7 488.9L683.3 479.6L683.9 478.2L684.5 465.5L685.1 467.6L685.7 469.8L686.3 469.2L686.9 478.1L687.5 475L688.1 472.1L688.7 470.7L689.3 467.3L689.9 475L690.5 481.3L691.1 488.2L691.7 483.7L692.3 485.9L692.9 489.8L693.5 492.3L694.1 484.5L694.7 489.5L695.3 481L695.9 482L696.5 474.3L697.1 471.7L697.7 472.6L698.3 475.4L698.9 471.5L699.5 460.4L700.1 461.6L700.7 465.1L701.3 460.5L701.9 465.8L702.5 476.5L703.1 476.4L703.7 481.1L704.3 480.6L704.9 478.9L705.5 480.8L706.1 487.9L706.7 482.4L707.3 483L707.9 481.5L708.5 491.1L709.1 492.1L709.7 484.8L710.3 483.5L710.9 483.7L711.5 480.4L712.1 480.2L712.7 478.2L713.3 477.3L713.9 475.7L714.5 471.7L715.1 472.7L715.7 472.4L716.3 470.3L716.9 470L717.5 465.8L718.1 471.7L718.7 470L719.3 469.3L719.9 472.2L720.5 474.9L721.1 472.8L721.7 462.2L722.3 468L722.9 470.8L723.5 474.6L724.1 481L724.7 478.6L725.3 470.7L725.9 467.9L726.5 457.2L727.1 461.9L727.7 466.7L728.3 472.5L728.9 469.9L729.5 474.3L730.1 471.3L730.7 473L731.3 475.2L731.9 477.2L732.5 483.4L733.1 488.7L733.7 483.5L734.3 485.5L734.9 483.3L735.5 473.9L736.1 479.5L736.7 479L737.3 480.8L737.9 482.5L738.5 480.5L739.1 475.8L739.7 481.2L740.3 483.6L740.9 478.5L741.5 481.6L742.1 476.8L742.7 479.8L743.3 479.5L743.9 484.9L744.5 483.2L745.1 482.6L745.7 481.5L746.3 482L746.9 479.7L747.5 482.8L748.1 483.5L748.7 491.8L749.3 482.8L749.9 480L750.5 479L751.1 478.5L751.7 474.3L752.3 475.9L752.9 470.2L753.5 467.5L754.1 462L754.7 471.4L755.3 475.3L755.9 489.2L756.5 479.6L757.1 477L757.7 473.8L758.3 473.8L758.9 467.7L759.5 466.2L760.1 463.4L760.7 464.3L761.3 467.2L761.9 477.3L762.5 469L763.1 475.5L763.7 479L764.3 478.8L764.9 479.2L765.5 487.1L766.1 481.4L766.7 485.2L767.3 484.7L767.9 486L768.5 486L769.1 479.8L769.7 479.4L770.3 480.1L770.9 476.4L771.5 477.5L772.1 477.3L772.7 474.5L773.3 475.3L773.9 467.5L774.5 472.8L775.1 468.1L775.7 472.7L776.3 475.4L776.9 473.4L777.5 473.9L778.1 475.5L778.7 471.3L779.3 472.7L779.9 479.2L780.5 478.6L781.1 470.4L781.7 480.7L782.3 478.6L782.9 472.7L783.5 467.6L784.1 472L784.7 466.5L785.3 471.7L785.9 464.1L786.5 462.9L787.1 465.4L787.7 476.5L788.3 476.4L788.9 480L789.5 476.3L790.1 472.7L790.7 475.7L791.3 468.2L791.9 464.2L792.5 464.7L793.1 464.6L793.7 460.9L794.3 473.3L794.9 473.3L795.5 472.6L796.1 465.2L796.7 468.4L797.3 467.2L797.9 467L798.5 464.6L799.1 461.3L799.7 453.9L800.3 454.4L800.9 457.8L801.5 462.8L802.1 466.9L802.7 467.5L803.3 465.2L803.9 470.2L804.5 468.6L805.1 466.2L805.7 469L806.3 471.1L806.9 475.5L807.5 472.3L808.1 472.9L808.7 475L809.3 472.5L809.9 468.5L810.5 468.1L811.1 468.5L811.7 470.4L812.3 466.8L812.9 470.9L813.5 470.2L814.1 465.1L814.7 468.3L815.3 465.3L815.9 467.5L816.5 459.4L817.1 464.6L817.7 461L818.3 458.8L818.9 459L819.5 462.6L820.1 462.3L820.7 468.1L821.3 467.9L821.9 463L822.5 465.8L823.1 460.2L823.7 463.3L824.3 464.4L824.9 467.7L825.5 472L826.1 480.1L826.7 484.6L827.3 480.4L827.9 477.2L828.5 474.3L829.1 479.4L829.7 480.2L830.3 486.2L830.9 482.9L831.5 473.9L832.1 472.7L832.7 468.8L833.3 473.3L833.9 477.8L834.5 476.5L835.1 472.4L835.7 468.7L836.3 461.6L836.9 468.4L837.5 466.2L838.1 467.2L838.7 468L839.3 469.7L839.9 467.8L840.5 465.8L841.1 465.6L841.7 468.7L842.3 470.9L842.9 471.9L843.5 470L844.1 476.2L844.7 475.8L845.3 475L845.9 475.2L846.5 476.1L847.1 474.7L847.7 473.1L848.3 475.4L848.9 484.3L849.5 478.7L850.1 472.1L850.7 465.1L851.3 465.5L851.9 468.5L852.5 468.5L853.1 466.3L853.7 469.9L854.3 476.3L854.9 464.3L855.5 465.2L856.1 471.7L856.7 471.1L857.3 481L857.9 480.3L858.5 462.6L859.1 458.2L859.7 463.8L860.3 470.7L860.9 473.6L861.5 475.5L862.1 476.6L862.7 482.1L863.3 471.2L863.9 463.8L864.5 456.7L865.1 466.2L865.7 469.6L866.3 478.7L866.9 473.7L867.5 468.6L868.1 462.6L868.7 462.2L869.3 463.2L869.9 468.5L870.5 470.2L871.1 473L871.7 475.7L872.3 480.8L872.9 479.8L873.5 480.6L874.1 476.3L874.7 478.2L875.3 475.8L875.9 469.7L876.5 470.2L877.1 469.2L877.7 471.7L878.3 478.5L878.9 487L879.5 472.3L880.1 459L880.7 468.2L881.3 491.2L881.9 479.4L882.5 463.9L883.1 470.9L883.7 476.2L884.3 471.5L884.9 460.7L885.5 457.5L886.1 455L886.7 455.7L887.3 453.2L887.9 450.5L888.5 451.8L889.1 452.2L889.7 459.2L890.3 451.9L890.9 462.9L891.5 469.8L892.1 475.3L892.7 480.7L893.3 466.2L893.9 463.3L894.5 455.2L895.1 454L895.7 456.3L896.3 456.7L896.9 460.6L897.5 466.3L898.1 460.2L898.7 454.1L899.3 455.6L899.9 453.6L900.5 457.6L901.1 454.9L901.7 455.5L902.3 454L902.9 456.2L903.5 453.5L904.1 452.9L904.7 453.6L905.3 453.9L905.9 456.4L906.5 456.9L907.1 457.1L907.7 458.6L908.3 459.1L908.9 453.2L909.5 452L910.1 450.3L910.7 450.3L911.3 457.6L911.9 458.9L912.5 465.3L913.1 466.2L913.7 465.5L914.3 462L914.9 463.5L915.5 465.2L916.1 466.1L916.7 467.8L917.3 469.4L917.9 473.4L918.5 474.5L919.1 482.8L919.7 486.8L920.3 483L920.9 479.8L921.5 476.5L922.1 473L922.7 480.4L923.3 473.4L923.9 477.3L924.5 476.5L925.1 475.9L925.7 478L926.3 478.9L926.9 483.2L927.5 482.5L928.1 480.6L928.7 470L929.3 466.3L929.9 461.6L930.5 454.1L931.1 456.3L931.7 451.9L932.3 459.5L932.9 457.9L933.5 450.7L934.1 454.6L934.7 458.6L935.3 456.7L935.9 457.8L936.5 459.8L937.1 475.7L937.7 466.7L938.3 471.5L938.9 473.9L939.5 470.7L940.1 467.2L940.7 468.5L941.3 465L941.9 465.6L942.5 465.9L943.1 467.4L943.7 461L944.3 467L944.9 470.1L945.5 470.1L946.1 463.7L946.7 469.6L947.3 467.3L947.9 466L948.5 462.5L949.1 462.8L949.7 463.2L950.3 463.3L950.9 458.3L951.5 459.2L952.1 460.9L952.7 458.2L953.3 457.7L953.9 458.2L954.5 456.4L955.1 459.9L955.7 456.4L956.3 457.5L956.3 500 Z" fill="#7cfc00" stroke="#2f6400" stroke-width="0.45" stroke-linejoin="round"/>
<rect x="257.8" y="474" width="1.2" height="26" fill="#000"/>
<rect x="119.6" y="506.7" width="837" height="16" fill="#00ff00"/>
<g><rect x="134.9" y="506.7" width="1.1" height="16" fill="#e08000"/><rect x="136" y="506.7" width="6.3" height="16" fill="#ff0000"/><rect x="142.3" y="506.7" width="1" height="16" fill="#e08000"/><rect x="146.5" y="506.7" width="1.1" height="16" fill="#e08000"/><rect x="147.6" y="506.7" width="1.5" height="16" fill="#40ff20"/><rect x="149" y="506.7" width="1.7" height="16" fill="#b06000"/><rect x="153.8" y="506.7" width="2.1" height="16" fill="#80f000"/><rect x="158.7" y="506.7" width="1.5" height="16" fill="#d8e800"/><rect x="166.4" y="506.7" width="3.6" height="16" fill="#d8e800"/><rect x="172.8" y="506.7" width="2.1" height="16" fill="#80f000"/><rect x="184.3" y="506.7" width="1.5" height="16" fill="#80f000"/><rect x="188.5" y="506.7" width="2.1" height="16" fill="#b06000"/><rect x="201.1" y="506.7" width="0.8" height="16" fill="#40ff20"/><rect x="211.6" y="506.7" width="1.7" height="16" fill="#80f000"/><rect x="215.4" y="506.7" width="1.7" height="16" fill="#80f000"/><rect x="220" y="506.7" width="1.5" height="16" fill="#80f000"/><rect x="234.7" y="506.7" width="2.1" height="16" fill="#80f000"/><rect x="243.1" y="506.7" width="1.1" height="16" fill="#40ff20"/><rect x="249.4" y="506.7" width="1" height="16" fill="#40ff20"/><rect x="257.4" y="506.7" width="1.1" height="16" fill="#000"/><rect x="266.2" y="506.7" width="0.8" height="16" fill="#40ff20"/><rect x="269.4" y="506.7" width="0.8" height="16" fill="#40ff20"/><rect x="283" y="506.7" width="1.1" height="16" fill="#80f000"/><rect x="291.4" y="506.7" width="1.7" height="16" fill="#80f000"/><rect x="319.8" y="506.7" width="2.1" height="16" fill="#80f000"/><rect x="329.2" y="506.7" width="0.8" height="16" fill="#40ff20"/><rect x="335.5" y="506.7" width="0.8" height="16" fill="#40ff20"/><rect x="342.9" y="506.7" width="0.8" height="16" fill="#40ff20"/><rect x="352.3" y="506.7" width="0.8" height="16" fill="#40ff20"/><rect x="359.6" y="506.7" width="0.8" height="16" fill="#80f000"/><rect x="364.9" y="506.7" width="0.8" height="16" fill="#40ff20"/><rect x="371.2" y="506.7" width="0.8" height="16" fill="#40ff20"/><rect x="383.8" y="506.7" width="0.8" height="16" fill="#40ff20"/><rect x="393.7" y="506.7" width="1.3" height="16" fill="#f04000"/><rect x="404.4" y="506.7" width="1.5" height="16" fill="#f04000"/><rect x="405.9" y="506.7" width="2.7" height="16" fill="#a0b000"/><rect x="408.6" y="506.7" width="2.5" height="16" fill="#d8e800"/><rect x="411.1" y="506.7" width="6.3" height="16" fill="#ff0000"/><rect x="417.4" y="506.7" width="1.5" height="16" fill="#e08000"/><rect x="418.9" y="506.7" width="3.4" height="16" fill="#ff0000"/><rect x="422.2" y="506.7" width="1.5" height="16" fill="#e08000"/><rect x="425.8" y="506.7" width="1.7" height="16" fill="#d8e800"/><rect x="439.4" y="506.7" width="1.5" height="16" fill="#80f000"/><rect x="449.9" y="506.7" width="1.5" height="16" fill="#80f000"/><rect x="462.6" y="506.7" width="2.1" height="16" fill="#a0b000"/><rect x="465.3" y="506.7" width="1.7" height="16" fill="#b06000"/><rect x="475.1" y="506.7" width="1.5" height="16" fill="#a0b000"/><rect x="480" y="506.7" width="1.5" height="16" fill="#c03000"/><rect x="481.4" y="506.7" width="1.5" height="16" fill="#e08000"/><rect x="485.6" y="506.7" width="2.7" height="16" fill="#ff0000"/><rect x="511.9" y="506.7" width="1.7" height="16" fill="#80f000"/><rect x="516.5" y="506.7" width="1.7" height="16" fill="#80f000"/><rect x="524.5" y="506.7" width="2.1" height="16" fill="#80f000"/><rect x="537.5" y="506.7" width="1.3" height="16" fill="#80f000"/><rect x="540.2" y="506.7" width="1.5" height="16" fill="#a0b000"/><rect x="543.4" y="506.7" width="1.5" height="16" fill="#80f000"/><rect x="546.5" y="506.7" width="1.5" height="16" fill="#80f000"/><rect x="550.1" y="506.7" width="1.7" height="16" fill="#e08000"/><rect x="568.6" y="506.7" width="1.7" height="16" fill="#c03000"/><rect x="570.3" y="506.7" width="2.1" height="16" fill="#a0b000"/><rect x="576" y="506.7" width="2.1" height="16" fill="#80f000"/><rect x="580.8" y="506.7" width="1.7" height="16" fill="#006000"/><rect x="606" y="506.7" width="1.7" height="16" fill="#a0b000"/><rect x="616.9" y="506.7" width="2.1" height="16" fill="#80f000"/><rect x="619" y="506.7" width="2.1" height="16" fill="#d8e800"/><rect x="625.7" y="506.7" width="2.7" height="16" fill="#d8e800"/><rect x="628.5" y="506.7" width="2.1" height="16" fill="#e08000"/><rect x="630.5" y="506.7" width="4.2" height="16" fill="#ff0000"/><rect x="662" y="506.7" width="1.7" height="16" fill="#80f000"/><rect x="668.4" y="506.7" width="2.1" height="16" fill="#ff0000"/><rect x="670.5" y="506.7" width="3.1" height="16" fill="#f0c000"/><rect x="673.6" y="506.7" width="1.7" height="16" fill="#80f000"/><rect x="675.3" y="506.7" width="1.5" height="16" fill="#c03000"/><rect x="683" y="506.7" width="1.5" height="16" fill="#b06000"/><rect x="697.8" y="506.7" width="1.7" height="16" fill="#ff0000"/><rect x="699.4" y="506.7" width="2.5" height="16" fill="#d8e800"/><rect x="715.2" y="506.7" width="1.7" height="16" fill="#80f000"/><rect x="719.8" y="506.7" width="1.7" height="16" fill="#80f000"/><rect x="725" y="506.7" width="4.2" height="16" fill="#80f000"/><rect x="752.7" y="506.7" width="1.5" height="16" fill="#80f000"/><rect x="758.6" y="506.7" width="2.2" height="16" fill="#e08000"/><rect x="773.6" y="506.7" width="2.2" height="16" fill="#80f000"/><rect x="784.2" y="506.7" width="2.2" height="16" fill="#e08000"/><rect x="789" y="506.7" width="1.1" height="16" fill="#40ff20"/><rect x="792.3" y="506.7" width="2.2" height="16" fill="#80f000"/><rect x="798.5" y="506.7" width="2.6" height="16" fill="#ff0000"/><rect x="801.1" y="506.7" width="1.5" height="16" fill="#e08000"/><rect x="802.6" y="506.7" width="1.8" height="16" fill="#d8e800"/><rect x="804.4" y="506.7" width="4.4" height="16" fill="#80f000"/><rect x="808.8" y="506.7" width="4.4" height="16" fill="#d8e800"/><rect x="813.2" y="506.7" width="2.2" height="16" fill="#80f000"/><rect x="815.4" y="506.7" width="3.3" height="16" fill="#e08000"/><rect x="818.7" y="506.7" width="2.2" height="16" fill="#d8e800"/><rect x="820.9" y="506.7" width="2.2" height="16" fill="#f04000"/><rect x="827.5" y="506.7" width="1.1" height="16" fill="#40ff20"/><rect x="831.9" y="506.7" width="1.1" height="16" fill="#40ff20"/><rect x="837.4" y="506.7" width="1.8" height="16" fill="#80f000"/><rect x="839.2" y="506.7" width="2" height="16" fill="#f0c000"/><rect x="848.4" y="506.7" width="2.2" height="16" fill="#80f000"/><rect x="857.2" y="506.7" width="2.2" height="16" fill="#80f000"/><rect x="862.7" y="506.7" width="1.5" height="16" fill="#a0b000"/><rect x="868.2" y="506.7" width="1.1" height="16" fill="#40ff20"/><rect x="872.6" y="506.7" width="1.1" height="16" fill="#40ff20"/><rect x="877" y="506.7" width="2.6" height="16" fill="#80f000"/><rect x="882.5" y="506.7" width="3.3" height="16" fill="#e08000"/><rect x="885.8" y="506.7" width="4" height="16" fill="#ff0000"/><rect x="893.5" y="506.7" width="1.5" height="16" fill="#e08000"/><rect x="895" y="506.7" width="1.8" height="16" fill="#f04000"/><rect x="896.8" y="506.7" width="1.1" height="16" fill="#f0c000"/><rect x="897.9" y="506.7" width="13.2" height="16" fill="#ff0000"/><rect x="911.1" y="506.7" width="2.2" height="16" fill="#e08000"/><rect x="913.3" y="506.7" width="3.3" height="16" fill="#80f000"/><rect x="921" y="506.7" width="1.1" height="16" fill="#40ff20"/><rect x="925.4" y="506.7" width="1.1" height="16" fill="#40ff20"/><rect x="929.8" y="506.7" width="2.2" height="16" fill="#80f000"/><rect x="932" y="506.7" width="4.4" height="16" fill="#f04000"/><rect x="936.4" y="506.7" width="2.2" height="16" fill="#e08000"/><rect x="938.6" y="506.7" width="2.2" height="16" fill="#d8e800"/><rect x="940.8" y="506.7" width="3.3" height="16" fill="#a0c000"/><rect x="947.4" y="506.7" width="3.3" height="16" fill="#e08000"/><rect x="950.7" y="506.7" width="4.4" height="16" fill="#f04000"/><rect x="955.1" y="506.7" width="1.5" height="16" fill="#805000"/></g>
<rect x="119.6" y="506.7" width="837" height="16" fill="none" stroke="#000" stroke-opacity=".55" stroke-width="0.8"/>
<rect x="119.2" y="506.7" width="1.4" height="16" fill="#000"/>
<rect x="120.5" y="528.8" width="836.1" height="39.2" fill="#000"/>
<g stroke="#a0a0a0" stroke-width="0.7" stroke-dasharray="1.5 1.7" opacity=".72" fill="none"><line x1="124.7" y1="528.8" x2="124.7" y2="568"/><line x1="156.9" y1="528.8" x2="156.9" y2="568"/><line x1="189.1" y1="528.8" x2="189.1" y2="568"/><line x1="221.2" y1="528.8" x2="221.2" y2="568"/><line x1="253.4" y1="528.8" x2="253.4" y2="568"/><line x1="285.6" y1="528.8" x2="285.6" y2="568"/><line x1="317.8" y1="528.8" x2="317.8" y2="568"/><line x1="350" y1="528.8" x2="350" y2="568"/><line x1="382.2" y1="528.8" x2="382.2" y2="568"/><line x1="414.4" y1="528.8" x2="414.4" y2="568"/><line x1="446.6" y1="528.8" x2="446.6" y2="568"/><line x1="478.8" y1="528.8" x2="478.8" y2="568"/><line x1="511" y1="528.8" x2="511" y2="568"/><line x1="543.1" y1="528.8" x2="543.1" y2="568"/><line x1="575.3" y1="528.8" x2="575.3" y2="568"/><line x1="607.5" y1="528.8" x2="607.5" y2="568"/><line x1="639.7" y1="528.8" x2="639.7" y2="568"/><line x1="671.9" y1="528.8" x2="671.9" y2="568"/><line x1="704.1" y1="528.8" x2="704.1" y2="568"/><line x1="736.3" y1="528.8" x2="736.3" y2="568"/><line x1="768.5" y1="528.8" x2="768.5" y2="568"/><line x1="800.7" y1="528.8" x2="800.7" y2="568"/><line x1="832.9" y1="528.8" x2="832.9" y2="568"/><line x1="865.1" y1="528.8" x2="865.1" y2="568"/><line x1="897.2" y1="528.8" x2="897.2" y2="568"/><line x1="929.4" y1="528.8" x2="929.4" y2="568"/><line x1="120.5" y1="535.2" x2="956.6" y2="535.2"/><line x1="120.5" y1="551.2" x2="956.6" y2="551.2"/></g>
<path d="M121 568L121 565.1L122 565.1L123 565L124 565.3L125 564.9L126 565.2L127 565.4L128 565L129 565.2L130 565.2L131 564.9L132 565.1L133 565.3L134 565.1L135 565.3L136 565L137 565L138 565L139 565.2L140 565.4L141 565.2L142 565.3L143 565.1L144 564.1L145 563.3L146 563.3L147 563.5L148 563.5L149 563.4L150 563.2L151 563.2L152 563.2L153 563.2L154 563.5L155 563.1L156 563.5L157 563.4L158 563L159 563.2L160 563.1L161 562.2L162 562.6L163 563.1L164 563L165 563.3L166 563L167 563.3L168 563.4L169 563.1L170 563L171 563L172 563.3L173 563L174 563.1L175 563.3L176 563.5L177 563.3L178 563.3L179 563.4L180 563.1L181 563.4L182 563.2L183 563.4L184 563.6L185 563.1L186 563.4L187 563.4L188 563.2L189 563.3L190 563.7L191 563.7L192 563.2L193 563.5L194 563.7L195 563.3L196 563.5L197 563.2L198 563.4L199 563.6L200 563.9L201 564.4L202 564.4L203 564.5L204 564.8L205 564.6L206 564.6L207 564.6L208 564.8L209 564.6L210 564.4L211 564.7L212 564.5L213 564.6L214 564.5L215 564.6L216 564.5L217 564.4L218 564.7L219 564.4L220 564.7L221 564.4L222 564.9L223 565.1L224 565.1L225 565.3L226 565L227 565.3L228 565.1L229 565L230 565.4L231 565.1L232 565.1L233 565.3L234 565.1L235 565.2L236 565L237 565.3L238 565L239 564.9L240 565.4L241 565L242 565.4L243 565.4L244 565.2L245 564.9L246 564.9L247 565L248 565.1L249 565.2L250 565.4L251 565.1L252 565L253 565.2L254 565L255 565L256 565.2L257 565.3L258 564.9L259 565.1L260 565.3L261 565.3L262 565.1L263 565.4L264 565L265 565.3L266 565.3L267 565.4L268 565.2L269 565L270 564.9L271 565.2L272 565L273 565.2L274 565L275 565.3L276 565L277 564.9L278 564.8L279 564.5L280 564.1L281 564L282 563.9L283 564L284 564.3L285 564.1L286 564.3L287 563.8L288 564.3L289 564.2L290 564.1L291 564.1L292 564.1L293 564.2L294 563.8L295 564.1L296 564.1L297 563.9L298 564.2L299 564.2L300 563.8L301 564.1L302 564L303 564L304 564.1L305 563.8L306 564.1L307 564L308 564.2L309 563.9L310 564.2L311 564.2L312 564.5L313 565L314 564.9L315 565.2L316 565.2L317 565.2L318 565.1L319 564.9L320 565L321 565.2L322 565L323 564.9L324 565.1L325 565.1L326 565.2L327 564.9L328 565.3L329 565.1L330 565.3L331 564.9L332 565.4L333 565.2L334 565.4L335 565.4L336 565.3L337 565L338 565.1L339 565L340 564.9L341 564.2L342 563.9L343 563.8L344 563.9L345 564.3L346 564.3L347 564L348 564.2L349 564L350 564.1L351 564L352 564.1L353 563.9L354 563.9L355 564L356 563.9L357 564L358 564.3L359 563.8L360 563.8L361 564.2L362 563.8L363 563.9L364 564.2L365 564.1L366 563.9L367 563.8L368 564.1L369 564.3L370 564.8L371 564.9L372 564.8L373 564.8L374 564.9L375 564.8L376 564.9L377 564.9L378 564.5L379 564.6L380 564.6L381 564.8L382 564.7L383 564.7L384 564.9L385 564.7L386 564.6L387 564.7L388 564.8L389 564.9L390 564.9L391 564.8L392 564.7L393 564.8L394 564.8L395 564.7L396 564.9L397 564.7L398 565L399 564.9L400 564.6L401 564.9L402 564.7L403 564.8L404 564.8L405 564.9L406 565L407 564.9L408 564.6L409 564.8L410 564.6L411 564.5L412 564.7L413 564.7L414 564.9L415 564.6L416 564.8L417 564.7L418 564.4L419 564.7L420 564.5L421 564.6L422 564.4L423 564.4L424 562.3L425 559.4L426 558.1L427 557.1L428 557.2L429 558L430 558.6L431 558.9L432 559.3L433 560.3L434 560.7L435 561.2L436 562.1L437 562.5L438 563L439 563.5L440 564L441 564L442 564.3L443 564.5L444 564.4L445 564.2L446 564.6L447 564.3L448 564.6L449 564.9L450 564.9L451 565.1L452 565L453 564.8L454 564.7L455 564.9L456 565L457 564.7L458 564.8L459 565L460 564.8L461 564.9L462 564.9L463 565.1L464 564.6L465 564.7L466 565L467 565L468 564.7L469 564.7L470 564.7L471 564.9L472 565.1L473 564.7L474 564.7L475 565L476 564.8L477 565.1L478 565.1L479 565.1L480 565L481 564.9L482 564.7L483 565L484 564.8L485 564.9L486 564.9L487 565.1L488 564.9L489 565.1L490 565.1L491 564.5L492 564.4L493 564.4L494 564.1L495 563.9L496 563.3L497 563.5L498 563.7L499 563.5L500 563.6L501 563.7L502 563.3L503 563.3L504 563.7L505 563.5L506 563.3L507 563.6L508 563.4L509 563.3L510 563.4L511 563.2L512 563.4L513 563.6L514 563.5L515 563.7L516 563.3L517 563.3L518 563.3L519 563.5L520 563.3L521 563.6L522 563.5L523 563.5L524 563.7L525 563.6L526 563.7L527 563.3L528 563.4L529 563.7L530 563.4L531 563.4L532 563.5L533 563.3L534 563.7L535 563.5L536 563.3L537 563.7L538 563.5L539 563.4L540 563.5L541 563.7L542 563.3L543 563.1L544 563.2L545 563L546 563.2L547 563L548 563.2L549 562.8L550 562.6L551 562.7L552 562.4L553 562.4L554 562.3L555 562.1L556 562.2L557 562.2L558 561.8L559 561.8L560 561.5L561 561.8L562 561.8L563 561.7L564 562.2L565 562.1L566 562.1L567 562.2L568 562.7L569 562.7L570 562.6L571 562.7L572 562.9L573 562.6L574 563L575 563L576 563.1L577 562.7L578 562.9L579 562.9L580 563L581 562.8L582 562.9L583 563L584 562.7L585 562.8L586 563L587 562.5L588 563L589 562.6L590 562.7L591 562.6L592 562.8L593 562.7L594 562.8L595 562.5L596 562.8L597 562.8L598 562.9L599 562.7L600 562.9L601 563.1L602 563L603 563.5L604 563.3L605 563.7L606 563.4L607 563.8L608 563.9L609 563.9L610 563.9L611 563.8L612 564L613 564.1L614 564.4L615 564.5L616 564.6L617 564.7L618 564.4L619 564.4L620 564.5L621 564.3L622 564.3L623 564.5L624 564.3L625 564.4L626 564.3L627 564.2L628 564.5L629 564L630 564.4L631 564.1L632 564.2L633 563.9L634 563.9L635 563.6L636 563L637 562.8L638 562.6L639 562.3L640 562.2L641 562L642 561.6L643 561.6L644 561.4L645 561.1L646 560.9L647 560.7L648 560.8L649 560.7L650 560.9L651 561.2L652 561.3L653 561.1L654 561.4L655 561.6L656 561.7L657 561.7L658 562L659 562.2L660 562.2L661 562.6L662 562.5L663 562.2L664 562.4L665 562.7L666 562.4L667 562.9L668 562.9L669 562.9L670 562.7L671 562.7L672 563.2L673 563L674 563.1L675 563.2L676 563.1L677 562.8L678 562.8L679 562.3L680 562.6L681 562.2L682 561.9L683 561.8L684 561.9L685 561.5L686 561.6L687 561.7L688 561.6L689 561.2L690 561.4L691 561.3L692 561.3L693 561L694 561.3L695 561.5L696 561.9L697 561.9L698 561.8L699 562.1L700 562.6L701 562.7L702 562.5L703 562L704 562.2L705 562.1L706 561.6L707 561.6L708 561.3L709 561L710 561.2L711 560.9L712 560.9L713 561.2L714 560.8L715 561.1L716 561.1L717 560.8L718 560.9L719 560.8L720 561L721 561.1L722 560.8L723 560.5L724 560.4L725 560.2L726 560.1L727 559.7L728 559.5L729 559.6L730 559.2L731 559.4L732 559.1L733 558.6L734 558.5L735 558.7L736 558.4L737 558.5L738 558.5L739 558.6L740 558.3L741 558.3L742 558.4L743 558.1L744 558.3L745 558.6L746 558.4L747 558.8L748 558.4L749 558.5L750 558.7L751 559L752 559.4L753 559.8L754 560.3L755 561L756 561.4L757 561.7L758 562L759 562.6L760 562.4L761 562.3L762 562.6L763 562.4L764 562.3L765 562.6L766 562.2L767 562.2L768 562.2L769 562.5L770 562.4L771 562.1L772 561.9L773 562.1L774 561.6L775 561.7L776 561.6L777 561.4L778 561.2L779 561L780 560.8L781 560.8L782 560.4L783 560.6L784 560.6L785 560.8L786 561.2L787 561.2L788 561.4L789 561.5L790 561.3L791 561.8L792 561.8L793 561.6L794 561.3L795 561.3L796 561.3L797 560.8L798 560.6L799 560.6L800 560.3L801 560.6L802 560.6L803 560.7L804 561.1L805 561L806 561.4L807 561.7L808 561.8L809 561.4L810 561.7L811 561.4L812 561.6L813 561.5L814 561.3L815 561.2L816 561.4L817 561L818 561.4L819 561.2L820 561.3L821 561.5L822 561.5L823 562.1L824 561.9L825 562.2L826 562.1L827 562.1L828 562.2L829 562L830 561.7L831 561.9L832 561.5L833 561.3L834 561.6L835 561.5L836 561.4L837 561.3L838 561.4L839 561.4L840 561.3L841 561.1L842 561.4L843 561.4L844 561.6L845 561.4L846 561.3L847 561.4L848 561.5L849 561.8L850 561.9L851 561.9L852 561.9L853 562.2L854 562.2L855 562.3L856 562.2L857 562.7L858 562.8L859 563.5L860 564L861 565L862 566L863 557.5L864 550L865 543.5L866 538.3L867 537.1L868 535.6L869 534.7L870 533.8L871 533.6L872 533.6L873 533L874 532.9L875 532.7L876 533.8L877 534.8L878 535.5L879 538.7L880 541.8L881 544.6L882 547.5L883 550.4L884 553.3L885 555.8L886 558.3L887 560.6L888 561.3L889 561.9L890 562.8L891 562.8L892 562.5L893 562.5L894 562.8L895 562.7L896 562.7L897 562.4L898 562.7L899 562.5L900 562.3L901 562.3L902 562.5L903 562.4L904 562.5L905 562.8L906 562.5L907 562.4L908 562.1L909 561.8L910 561.8L911 561.5L912 561.1L913 560.9L914 559.8L915 558.7L916 557.9L917 556.7L918 555.8L919 554.7L920 552.8L921 550.9L922 551.2L923 553.5L924 555.7L925 557.3L926 558.3L927 559.2L928 560.5L929 560.9L930 561.1L931 561.1L932 561.3L933 561.4L934 561.5L935 561.7L936 561.6L937 561.4L938 561.2L939 561L940 560.7L941 560.1L942 560L943 560.7L944 561.1L945 561.6L946 561.7L947 562.2L948 562.5L949 562.5L950 562.6L951 562.8L952 562.5L953 562.6L954 562.5L955 562.6L956 562.6L956 568 Z" fill="#00ffff"/>
<rect x="257.9" y="563" width="1" height="5" fill="#000"/>
<rect x="124.2" y="568" width="0.9" height="1.4" fill="#333" opacity="0.5"/><rect x="156.4" y="568" width="0.9" height="1.4" fill="#333" opacity="0.5"/><rect x="188.6" y="568" width="0.9" height="1.4" fill="#333" opacity="0.5"/><rect x="220.8" y="568" width="0.9" height="2.6" fill="#333" opacity="0.8"/><rect x="253" y="568" width="0.9" height="1.4" fill="#333" opacity="0.5"/><rect x="285.2" y="568" width="0.9" height="1.4" fill="#333" opacity="0.5"/><rect x="317.4" y="568" width="0.9" height="1.4" fill="#333" opacity="0.5"/><rect x="349.6" y="568" width="0.9" height="2.6" fill="#333" opacity="0.8"/><rect x="381.8" y="568" width="0.9" height="1.4" fill="#333" opacity="0.5"/><rect x="413.9" y="568" width="0.9" height="1.4" fill="#333" opacity="0.5"/><rect x="446.1" y="568" width="0.9" height="1.4" fill="#333" opacity="0.5"/><rect x="478.3" y="568" width="0.9" height="2.6" fill="#333" opacity="0.8"/><rect x="510.5" y="568" width="0.9" height="1.4" fill="#333" opacity="0.5"/><rect x="542.7" y="568" width="0.9" height="1.4" fill="#333" opacity="0.5"/><rect x="574.9" y="568" width="0.9" height="1.4" fill="#333" opacity="0.5"/><rect x="607.1" y="568" width="0.9" height="2.6" fill="#333" opacity="0.8"/><rect x="639.3" y="568" width="0.9" height="1.4" fill="#333" opacity="0.5"/><rect x="671.5" y="568" width="0.9" height="1.4" fill="#333" opacity="0.5"/><rect x="703.7" y="568" width="0.9" height="1.4" fill="#333" opacity="0.5"/><rect x="735.8" y="568" width="0.9" height="2.6" fill="#333" opacity="0.8"/><rect x="768" y="568" width="0.9" height="1.4" fill="#333" opacity="0.5"/><rect x="800.2" y="568" width="0.9" height="1.4" fill="#333" opacity="0.5"/><rect x="832.4" y="568" width="0.9" height="1.4" fill="#333" opacity="0.5"/><rect x="864.6" y="568" width="0.9" height="2.6" fill="#333" opacity="0.8"/><rect x="896.8" y="568" width="0.9" height="1.4" fill="#333" opacity="0.5"/><rect x="929" y="568" width="0.9" height="1.4" fill="#333" opacity="0.5"/>
<defs>
<radialGradient id="orb" cx="50%" cy="40%" r="60%"><stop offset="0" stop-color="#fff"/><stop offset=".75" stop-color="#f2f2f4"/><stop offset="1" stop-color="#b8b8c0"/></radialGradient>
<linearGradient id="bl" x1="0" y1="0" x2="0" y2="1"><stop offset="0" stop-color="#2f86e0"/><stop offset="1" stop-color="#a6d6f6"/></linearGradient>
<linearGradient id="bl2" x1="0" y1="0" x2="1" y2="0"><stop offset="0" stop-color="#5aa8e6"/><stop offset=".5" stop-color="#2a78c8"/><stop offset="1" stop-color="#1d5ea8"/></linearGradient>
<radialGradient id="gr" cx="45%" cy="35%" r="65%"><stop offset="0" stop-color="#8cf07c"/><stop offset=".6" stop-color="#38c428"/><stop offset="1" stop-color="#1f9a18"/></radialGradient>
<linearGradient id="gy" x1="0" y1="0" x2="1" y2="0"><stop offset="0" stop-color="#c4c4c4"/><stop offset="1" stop-color="#8c8c8c"/></linearGradient>
<linearGradient id="gy2" x1="1" y1="0" x2="0" y2="0"><stop offset="0" stop-color="#c4c4c4"/><stop offset="1" stop-color="#8c8c8c"/></linearGradient>
<linearGradient id="fo" x1="0" y1="0" x2="1" y2="1"><stop offset="0" stop-color="#fbd070"/><stop offset="1" stop-color="#f09a28"/></linearGradient>
<linearGradient id="rx" x1="0" y1="0" x2="0" y2="1"><stop offset="0" stop-color="#f07070"/><stop offset="1" stop-color="#d01818"/></linearGradient>
<linearGradient id="brn" x1="0" y1="0" x2="0" y2="1"><stop offset="0" stop-color="#c4dcfa"/><stop offset=".45" stop-color="#a4c8f6"/><stop offset="1" stop-color="#86b6f0"/></linearGradient>
<linearGradient id="bod" x1="0" y1="0" x2="1" y2="1"><stop offset="0" stop-color="#6ab8ee"/><stop offset="1" stop-color="#2a78cc"/></linearGradient>
<radialGradient id="skn" cx="60%" cy="55%" r="60%"><stop offset="0" stop-color="#f8dcc0"/><stop offset="1" stop-color="#e0a070"/></radialGradient>
<radialGradient id="key" cx="40%" cy="35%" r="70%"><stop offset="0" stop-color="#fcdc98"/><stop offset="1" stop-color="#f2a436"/></radialGradient>
<linearGradient id="tri" x1=".3" y1="0" x2=".8" y2="1"><stop offset="0" stop-color="#c4eafc"/><stop offset=".55" stop-color="#6cbcf0"/><stop offset="1" stop-color="#2a86dc"/></linearGradient>
</defs>
<!-- orb -->
<g>
<circle cx="48.800" cy="159.200" r="12.100" fill="url(#orb)" stroke="#a4a4ac" stroke-width="1.100"/>
<circle cx="48.800" cy="159.200" r="10.600" fill="none" stroke="#fff" stroke-width="1" opacity=".9"/>
<path d="M38.600 159.500c-.8-4 2-7.600 6-8.200 3.200-1.400 7.600-1.200 10 .8 3 1 5 4.400 3.800 7.600.6 2.400-1.200 4.600-3.600 4.400l-1.400.4c-.2 1.600-1.200 2.800-2.600 2.800-1 0-1.800-.8-1.800-2-1 .6-2.400.4-3.400-.2-3.400.4-6.400-2-7-5.600z" fill="url(#brn)" stroke="#7eaee8" stroke-width=".5"/>
<path d="M42.500 154.500c1.500-1.600 3.500-1.800 5-.4m2.500-1.600c1.600-.6 3.400.2 4 1.800m-11 7c1.600 1.200 3.600 1.200 5-.2m3.500.9c1.500.6 3 .2 4-1" fill="none" stroke="#78a8e6" stroke-width=".55"/>
<path d="M38.200 160.600l2.200-.6.800-2.400 1 2.200 1.400-.6 2.200.4 2-.8 2.200.2 1.600-1.400 1.400-1.600 1.800 1.200 1.400 2.600 1.600 1.600 1.400.2" fill="none" stroke="#f07478" stroke-width=".8" opacity=".9"/>
</g>
<!-- login -->
<g>
<path d="M41.800 200.500c0-4.600 3.400-7.600 7.600-7.600 3.800 0 6.800 2.600 6.800 6.600 0 3.200-3.200 5.400-7.400 5.400-4 0-7-1.600-7-4.400z" fill="url(#bod)"/>
<circle cx="51.200" cy="189" r="4.500" fill="url(#skn)"/>
<path d="M46.600 188.600c-.6-3.600 1.600-5.800 4.600-5.800 2.800 0 4.800 1.600 4.800 4-1.600-1.200-3.800-1.400-5.400-.6-1.600.2-2.600 1.200-3.200 3z" fill="#6e3e14"/>
<path d="M56.600 195.800l-7.800 8.200 1.800 1.600 2.200-1.800.2-1.600 1.800-.2 1-1.400.2-1.400 1.800-.2 1.800-1.800z" fill="#f2a83a" stroke="#e0902a" stroke-width=".3"/>
<circle cx="60" cy="192.800" r="4.800" fill="url(#key)" stroke="#e89a30" stroke-width=".4"/>
<circle cx="61.400" cy="191.200" r="1.100" fill="#fdeccc"/>
</g>
<!-- minimise -->
<path d="M85.400 188.300L96.200 199.100H74.900z" fill="url(#tri)" stroke="#4a7ad2" stroke-width=".8" stroke-linejoin="round"/>
<rect x="75" y="200.400" width="21.500" height="1.200" fill="#fff" opacity=".8"/>
<!-- add page -->
<g>
<path d="M114 186.500h9.600c.6 0 1 .6 1 1.200v13.800h-10.600z" fill="#fff" stroke="#6c9fe2" stroke-width=".9"/>
<path d="M135 186.500h-9.400c-.6 0-1 .6-1 1.200v13.800H135z" fill="#f4f8fe" stroke="#6c9fe2" stroke-width=".9"/>
<path d="M113.800 201.600h21.400v1.200h-8.600l-2 1.200-2-1.200h-8.800z" fill="#5a96e0"/>
<path d="M128.400 184.400h2.800v3h3v2.800h-3v3h-2.800v-3h-3v-2.800h3z" fill="#2fc030" stroke="#1c9a20" stroke-width=".4"/>
</g>
<!-- add panel -->
<g>
<rect x="143.300" y="187.300" width="7.600" height="14.400" fill="url(#bl2)"/>
<rect x="154.600" y="187.300" width="8.200" height="14.400" fill="url(#bl2)"/>
<path d="M157.800 184h2.800v3h3v2.800h-3v3h-2.800v-3h-3V187h3z" fill="#2fc030" stroke="#1c9a20" stroke-width=".4"/>
</g>
<!-- edit layout -->
<g>
<rect x="186.500" y="184.500" width="14" height="19.500" fill="#f4f6fa" stroke="#9aa6b8" stroke-width=".6"/>
<rect x="182.300" y="183.700" width="5" height="21.300" fill="#2f8ade" stroke="#1c5eb0" stroke-width=".5"/>
<path d="M183 187h2m-2 3h2m-2 3h2m-2 3h2m-2 3h2m-2 3h2" stroke="#0c3c80" stroke-width=".5"/>
<path d="M188.500 192h8m-8 2.500h6" stroke="#8a94a6" stroke-width=".8"/>
<path d="M201 191.500v13.300h-13.300z" fill="#f2cc30" stroke="#c09010" stroke-width=".6"/>
<path d="M198.500 198v4.300h-4.300z" fill="#f4f6fa" stroke="#c09010" stroke-width=".4"/>
<path d="M191.600 193.800l6.800-7.400 2.200 2-6.800 7.400-2.800.8z" fill="#58a6ea" stroke="#2f78c8" stroke-width=".4"/>
</g>
<!-- advanced editor -->
<g>
<path d="M222.500 185.500c0-1.200 1-1.800 2-1.800h11c1.800 0 2.600 1.600 2 3l-1.600 1h-2.400v12.500c0 2.400-1.600 4-3.600 4h-11.400c-1.800 0-2.600-1.400-2.400-3h6.400z" fill="#dbe9fa" stroke="#a9c6ec" stroke-width=".7"/>
<path d="M216.200 201.200h11.500c.6 1.600-.2 2.800-1.400 3" fill="#c6dbf6" stroke="#a9c6ec" stroke-width=".6"/>
</g>
<!-- clear layout -->
<g>
<path d="M261.500 183.500h12.500l4.500 4.500v17h-17z" fill="#f0f5fc" stroke="#9ab8e2" stroke-width=".7"/>
<path d="M274 183.500v4.500h4.500" fill="#dce8f8" stroke="#9ab8e2" stroke-width=".6"/>
<path d="M264.500 198.500h11m-11 2.500h11" stroke="#bcd0ea" stroke-width=".7"/>
<path d="M258.200 194.800l4.800-4.400c.6-.6 1.400-.8 2.200-.8h7.600c1.200 0 1.600 1.200.8 2l-4.600 4.600c-.6.600-1.400.9-2.200.9h-7.800c-1.200 0-1.600-1.400-.8-2.300z" fill="#e44a4a"/>
<path d="M258.200 194.800l4.200-3.900 4.300.1-3.700 6.100h-4c-1.200 0-1.600-1.400-.8-2.300z" fill="#2f6fc0"/>
<path d="M258 196.200h10.300c1 0 1.600-.3 2.200-.9l3.700-3.700v1.400l-3.900 4c-.6.600-1.400.9-2.200.9h-8.900c-.8 0-1.200-.8-1.200-1.700z" fill="#1c4e98" opacity=".85"/>
</g>
<!-- auto layout 1 -->
<g>
<rect x="292.500" y="183.300" width="21.300" height="21.400" fill="#1a1a14"/>
<rect x="293" y="184" width="9.600" height="3.600" fill="#f01818"/>
<rect x="303.600" y="184" width="9.700" height="4.400" fill="#f88a10"/>
<path d="M293.500 191l3-1 3 .5 3-1" stroke="#20c820" stroke-width=".9" fill="none"/>
<rect x="303.600" y="190" width="9.700" height="3.600" fill="#a8a850"/>
<rect x="293" y="194.200" width="9.600" height="3" fill="#e8e010"/>
<rect x="303.600" y="195.200" width="9.700" height="2.600" fill="#8a8a78"/>
<rect x="293" y="198.600" width="9.600" height="1.600" fill="#9a9a90"/>
<rect x="293" y="201" width="9.600" height="2.800" fill="#10d0e0"/>
<rect x="303.600" y="199.600" width="9.700" height="3.800" fill="#e81490"/>
<rect x="302.600" y="183.300" width="1" height="21.400" fill="#cfcfae"/>
</g>
<!-- auto layout 2 -->
<g>
<rect x="327.700" y="185.500" width="21.300" height="16.500" fill="#14140c"/>
<rect x="327.700" y="185.500" width="3" height="16.500" fill="#ecec9c"/>
<path d="M331 189.200l2-.6 2 .6 2-.8 2 .8 2-.6 2 .6 2-.8 2 .6 1.600-.2" stroke="#f02020" stroke-width="1.300" fill="none"/>
<path d="M331 193l2-1 2 1.200 2-1.400 2 1.200 2-1 2 1 2-1.400 2 1 1.600-.4" stroke="#18d8e8" stroke-width="1.400" fill="none"/>
<path d="M331 196.400l3-.4 3 .4 3-.4 3 .4 3-.4 2.600.2" stroke="#d8c818" stroke-width="1.200" fill="none"/>
<path d="M331 199.400h17.600" stroke="#406040" stroke-width=".6"/>
</g>
<!-- restore -->
<g>
<circle cx="372.300" cy="193.800" r="10.500" fill="url(#gr)" stroke="#2aa422" stroke-width=".6"/>
<path d="M367.200 190.600l5.400-3.400v2.200c3.800 0 6 2.400 6 5.400 0 2.600-1.600 4.600-4 5.400 1.400-1.400 1.800-2.800 1.400-4.200-.4-1.600-1.600-2.400-3.400-2.400v2.400z" fill="#fff" opacity=".95"/>
</g>
<!-- save layout -->
<g>
<path d="M403.300 185c0-.8.600-1.300 1.300-1.300h19.200l1.200 1.200v19c0 .6-.5 1.100-1.100 1.100h-19.400c-.7 0-1.200-.5-1.200-1.200z" fill="#8cc8f2" stroke="#4a8cc8" stroke-width=".7"/>
<rect x="407.500" y="183.900" width="12.500" height="6.600" fill="#9a9ea6"/>
<rect x="415.200" y="184.800" width="2.600" height="4.800" fill="#3a3e46"/>
<rect x="406" y="193.500" width="10" height="10.500" fill="#e6f0fa" stroke="#6a9ed2" stroke-width=".5"/>
<path d="M407.500 196h7m-7 2.200h7m-7 2.200h7" stroke="#8ab4de" stroke-width=".6"/>
<rect x="413.600" y="192.500" width="2.600" height="12.500" fill="#2f8ade"/>
<rect x="416.200" y="192.500" width="8.800" height="12.500" fill="#f4f6fa" stroke="#9aa6b8" stroke-width=".4"/>
<path d="M425 195.500v9.500h-8.800z" fill="#f2cc30" stroke="#b88c10" stroke-width=".5"/>
<path d="M423.300 200.500v3h-3z" fill="#f4f6fa" stroke="#b88c10" stroke-width=".3"/>
</g>
<!-- load layout -->
<g>
<path d="M433.800 187.500l9-3.200c1-.4 1.800.2 1.800 1.200v17.700l-10.800-2.200z" fill="#f7b545"/>
<path d="M436 186.500h11.500c.8 0 1.300.5 1.300 1.300v15.500h-12.800z" fill="#fbd67e"/>
<path d="M433.800 187.500l8.600 2.600v15l-8.600-3.800z" fill="url(#fo)" stroke="#e89a28" stroke-width=".4"/>
<rect x="442.600" y="192.500" width="2.400" height="12.500" fill="#2f8ade"/>
<rect x="445" y="192.500" width="9" height="12.500" fill="#f4f6fa" stroke="#9aa6b8" stroke-width=".4"/>
<path d="M454.200 195.500v9.500h-9z" fill="#f2cc30" stroke="#b88c10" stroke-width=".5"/>
<path d="M452.400 200.500v3h-3z" fill="#f4f6fa" stroke="#b88c10" stroke-width=".3"/>
</g>
<!-- prev / next -->
<path d="M485 184.200v20.400l-11.200-10.200z" fill="url(#gy2)"/>
<path d="M504.200 184.200v20.400l10.800-10.200z" fill="url(#gy)"/>
<path d="M518.300 231.200h3.600v3.600h-3.600z" fill="none" stroke="#8a92a6" stroke-width=".6"/><path d="M519.600 232.500l1.800 1.800m0-1.500v1.500h-1.500" fill="none" stroke="#5a6480" stroke-width=".6"/>
<!-- cursor -->
<path d="M534 183.700l16.800 6.800-4.400 3.200 8.600 7.600-3.400 3.400-8.200-8-3.600 4.600z" fill="url(#tri)" stroke="#2a70c8" stroke-width=".6" stroke-linejoin="round"/>
<!-- zoom -->
<g>
<path d="M573 194l8.600 8.400" stroke="#f0a040" stroke-width="2.600" stroke-linecap="round"/>
<circle cx="568.500" cy="189.300" r="5.700" fill="#b8dcf8" stroke="#5a9ee6" stroke-width="1.300"/>
<path d="M565 187.500c.8-1.800 2.600-2.600 4.400-2.200" stroke="#fff" stroke-width="1" fill="none"/>
</g>
<!-- events -->
<path d="M603.800 183.700h8.200l-5.200 8h3.800l-11.800 13.200 3.600-10.200h-3.200z" fill="#28d428" stroke="#18a018" stroke-width=".5" stroke-linejoin="round"/>
<!-- notes -->
<g>
<path d="M623.200 185.200l8.300-1.600v21.500l-8.300-3.200z" fill="#5ea6e6" stroke="#3a7ec8" stroke-width=".5"/>
<path d="M631.500 183.600l6.600 1.400v17.200l-6.600 2.900z" fill="#8cc4f2" stroke="#4a8cd0" stroke-width=".5"/>
<path d="M631.500 186l4.800-.6v16.200l-4.800 2z" fill="#eef4fb"/>
<path d="M633.200 197.600l5.600-8.400 1.600 1-5.600 8.400-2 1.200z" fill="#f4c040" stroke="#c89020" stroke-width=".3"/>
<path d="M638.800 189.200l.8-1.200 1.600 1-.8 1.200z" fill="#e87878"/>
</g>
<!-- series tab icon -->
<g>
<path d="M40.200 254.600l5.200-5.400 4.200 3.400-5 5.400z" fill="#eef3f8" stroke="#5a8cc8" stroke-width=".6"/>
<path d="M40.200 254.600l4.400 3.400 5-5.400" fill="none" stroke="#3aa050" stroke-width=".9"/>
<path d="M40.600 253.800l2.400-1.600 1.400 2.200 2.200-3 1.200 1.600 1.800-1" fill="none" stroke="#e03030" stroke-width="1.100"/>
</g>
<!-- notebook icon -->
<g>
<path d="M88.500 248.600l7.200 1.400-3.400 7.600-7.600-1.800z" fill="#5aa6ee" stroke="#2f78d0" stroke-width=".6"/>
<path d="M84.700 255.800l7.600 1.800.2 1-7.800-1.800z" fill="#dce8f6" stroke="#2f78d0" stroke-width=".4"/>
<path d="M89 250.600l4.600.9m-5.400.9l4.600.9" stroke="#a6d0f8" stroke-width=".6"/>
</g>
<rect x="64.6" y="266.6" width="10.9" height="10.400" rx="2.200" fill="url(#rx)"/><path d="M68.100 269.900l3.900 3.900m0-3.900l-3.900 3.900" stroke="#fff" stroke-width="1.250" stroke-linecap="round"/>
<!-- toolbar icons -->
<g>
<rect x="39.300" y="611.800" width="10.900" height="10.500" rx="2.200" fill="url(#rx)"/>
<path d="M42.800 615.100l3.900 3.900m0-3.900l-3.900 3.900" stroke="#fff" stroke-width="1.400" stroke-linecap="round"/>
<path d="M56.800 612v9.600" stroke="#3a6ad0" stroke-width="1"/>
<path d="M56.400 621.600h10.200" stroke="#28a838" stroke-width="1"/><path d="M66 620.300l1.600 1.300-1.600 1.300z" fill="#28a838"/>
<path d="M57.800 619.800l2-4.600 2 3 2-.6 2.600-5.200" fill="none" stroke="#d83030" stroke-width=".9"/>
<path d="M73.200 616.700h3.600l-1.800 2.200z" fill="#222"/>
<rect x="81" y="610.500" width="1" height="13" fill="#b4bac8"/>
<!-- printer -->
<path d="M94.500 612.500h5.500l1 3.500h-7.500z" fill="#4a4e56"/>
<path d="M91.800 616.500c0-.8.600-1.300 1.300-1.300h8.600c.8 0 1.300.5 1.300 1.300v3.500c0 .6-.5 1-1 1h-9.200c-.6 0-1-.4-1-1z" fill="#7c828e"/>
<circle cx="95.500" cy="618.300" r="2.300" fill="#6aa8ea"/>
<rect x="98.500" y="618.800" width="2.600" height="2.600" fill="#f0a030"/>
<!-- save -->
<path d="M107.500 612.600c0-.4.300-.6.600-.6h9.400l.8.800v9c0 .4-.3.700-.7.700h-9.500c-.4 0-.6-.3-.6-.7z" fill="#4e96de" stroke="#3a78c0" stroke-width=".4"/>
<rect x="110" y="612" width="5.600" height="3.600" fill="#e8f0fa"/><rect x="113.400" y="612.500" width="1.400" height="2.600" fill="#3a6eb0"/>
<rect x="109.300" y="617.500" width="7.400" height="5" fill="#dfe8f4"/>
<rect x="122.300" y="610.500" width="1" height="13" fill="#b4bac8"/>
<!-- I beam -->
<rect x="134.800" y="612.200" width="9.500" height="1.700" fill="#2a2ac8"/>
<rect x="134.800" y="620.600" width="9.500" height="1.700" fill="#2a2ac8"/>
<path d="M139.500 613.900l2.200 2.400h-1.400v2h1.400l-2.200 2.400-2.200-2.400h1.400v-2h-1.400z" fill="#f01818"/>
<rect x="149" y="610.500" width="1" height="13" fill="#b4bac8"/>
<!-- list -->
<rect x="161.200" y="611.600" width="8.600" height="10" fill="#bfe0fa" stroke="#5a9ee0" stroke-width=".6"/>
<path d="M163 614.300h5m-5 2.300h5m-5 2.300h5" stroke="#3a70b0" stroke-width=".8"/>
<path d="M177.400 616.700h3.600l-1.800 2.200z" fill="#222"/>
<rect x="184.500" y="610.500" width="1" height="13" fill="#b4bac8"/>
<!-- zoom highlighted -->
<rect x="194" y="609.300" width="16" height="14.200" fill="#f7bc50" stroke="#e8a030" stroke-width=".5"/>
<path d="M202 617.400l3.600 3.800" stroke="#e88838" stroke-width="1.400" stroke-linecap="round"/>
<circle cx="199.600" cy="614.900" r="3.400" fill="#b8dcf8" stroke="#5a9ee6" stroke-width=".9"/>
<rect x="211.300" y="610.500" width="1" height="13" fill="#c4cad6"/>
<!-- group -->
<rect x="223.500" y="613.500" width="5.600" height="4.600" fill="none" stroke="#222" stroke-width=".9"/>
<rect x="226.200" y="616.600" width="6" height="5" fill="#e8ecf4" stroke="#222" stroke-width=".9"/>
<g fill="#3a3ad0"><rect x="222.300" y="612.400" width="2" height="2"/><rect x="228.200" y="612.400" width="2" height="2"/><rect x="222.300" y="617.200" width="2" height="2"/><rect x="225.200" y="620.600" width="2" height="2"/><rect x="231.300" y="620.600" width="2" height="2"/><rect x="231.300" y="615.600" width="2" height="2"/></g>
<!-- calculator -->
<rect x="239.300" y="612" width="7.500" height="10.500" rx=".8" fill="#7e8088" stroke="#55575e" stroke-width=".5"/>
<rect x="240.400" y="613.200" width="5.300" height="2.200" fill="#d8dce0"/>
<path d="M240.600 617.300h5m-5 1.700h5m-5 1.700h5" stroke="#c8c8cc" stroke-width=".8" stroke-dasharray="1.100 .8"/>
<rect x="244.300" y="620" width="1.500" height="1.500" fill="#e04040"/>
<!-- sigma -->
<path d="M253.600 612h10.200v2.600h-5.600l3.400 2.700-3.400 2.700h5.600v2.600h-10.200v-2.200l4-3.100-4-3.100z" fill="#2a7ef0" stroke="#1858c8" stroke-width=".4"/>
<!-- script -->
<path d="M272 613c0-.7.500-1 1-1h5.600c1 0 1.400.9 1 1.600l-.8.600h-1.200v6.200c0 1.300-.8 2.100-1.900 2.100h-5.800c-1 0-1.400-.8-1.200-1.600h3.300z" fill="#dbe9fa" stroke="#b4cdee" stroke-width=".5"/>
<rect x="284" y="610.500" width="1" height="13" fill="#b4bac8"/>
<!-- funnel -->
<path d="M295.500 612.600c0-.6 2.400-1 5.300-1s5.300.4 5.300 1l-4 4.400v5.200l-2.600-1.200v-4z" fill="#2f8ad8" stroke="#1c68b8" stroke-width=".4"/>
<!-- chain -->
<g fill="none" stroke="#8a8c92" stroke-width="1.200"><rect x="311.500" y="613" width="6.200" height="3.600" rx="1.800" transform="rotate(40 314.600 614.800)"/><rect x="316" y="617.600" width="6.200" height="3.600" rx="1.800" transform="rotate(40 319.100 619.400)"/></g>
</g>

</svg>
</div></div>
</body></html>
